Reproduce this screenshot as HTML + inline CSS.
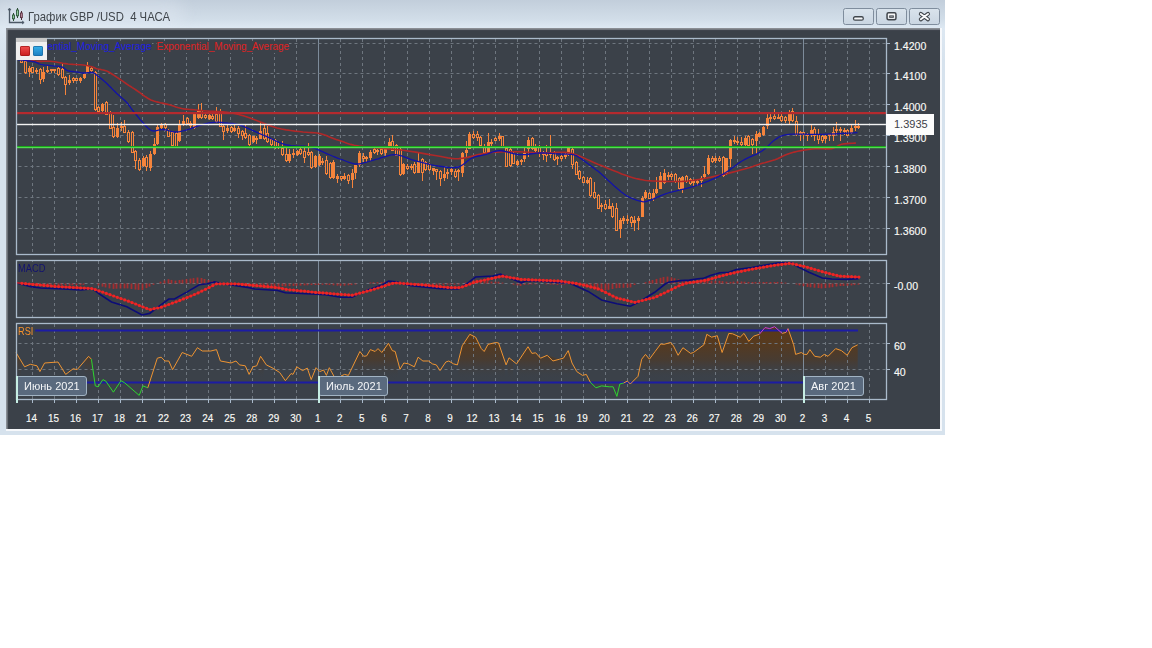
<!DOCTYPE html>
<html><head><meta charset="utf-8">
<style>
html,body{margin:0;padding:0;background:#fff;width:1152px;height:648px;overflow:hidden;font-family:"Liberation Sans",sans-serif;}
#win{position:absolute;left:0;top:0;width:945px;height:435px;background:linear-gradient(#c2cedb,#d2dee9 20px,#dde8f2 28px,#d6e2ed 60px,#d6e2ed);}
#glow{position:absolute;left:-6px;top:0px;width:190px;height:27px;border-radius:14px;background:rgba(232,239,245,0.35);filter:blur(8px);}
#title{position:absolute;left:28px;top:9.7px;font-size:12.2px;line-height:14px;color:#40464c;white-space:pre;transform:scaleX(0.93);transform-origin:0 0;}
#dark{position:absolute;left:6px;top:28px;width:934px;height:401px;background:#3b4149;box-shadow:inset 1.6px 1.8px 0.8px #8d9298;}
#shadow{position:absolute;left:6px;top:28px;width:936px;height:403px;background:#f6f8fb;}

.btn{position:absolute;top:8px;width:28.5px;height:15px;border:1px solid #7f8d9d;border-radius:2.5px;background:linear-gradient(#d9e3ec,#cad6e2);}
svg{position:absolute;left:0;top:0;}
.ax{font-size:11px;fill:#fafaf6;stroke:#fafaf6;stroke-width:0.15;font-family:"Liberation Sans",sans-serif;}
.lbl{position:absolute;top:376px;height:20px;background:#5a6a7e;border:1px solid #a2b4c4;border-radius:3px;box-sizing:border-box;}
.lbl span{position:absolute;left:7px;top:1.7px;color:#f4f6f8;font-size:11.5px;line-height:14px;white-space:pre;transform:scaleX(0.96);transform-origin:0 0;}
.mk{position:absolute;top:376px;width:2px;height:27px;background:#c6eee4;}
#legend{position:absolute;left:16px;top:38px;width:31px;height:22px;background:#f0f0f0;}
#legend .strip{position:absolute;left:0;top:0;width:31px;height:4px;background:#c8c8c8;}
.sq{position:absolute;top:8px;width:9.8px;height:9.8px;border-radius:2px;}
.leg{position:absolute;top:40.5px;font-size:10px;line-height:12px;white-space:pre;background:#3b4149;}
.plab{position:absolute;font-size:11px;line-height:12px;white-space:pre;background:#3b4149;transform-origin:0 0;}
</style></head><body>
<div id="win">
 <div id="glow"></div>
 <svg width="30" height="30" style="left:0;top:0;position:absolute">
  <path d="M9.5 9 V22.5 H23" fill="none" stroke="#4c5866" stroke-width="1.3"/>
  <path d="M8 10 L9.5 8 L11 10 Z M22.5 21 L24.2 22.5 L22.5 24 Z" fill="#4c5866" stroke="#4c5866" stroke-width="0.6"/>
  <line x1="13.5" y1="13" x2="13.5" y2="21" stroke="#2e4e38" stroke-width="1"/><rect x="12.5" y="15" width="2" height="3.8" fill="#90c89c" stroke="#2e5a3a" stroke-width="0.9"/>
  <line x1="17.5" y1="8" x2="17.5" y2="18" stroke="#2e4e38" stroke-width="1"/><rect x="16.5" y="10" width="2" height="5.8" fill="#90c89c" stroke="#2e5a3a" stroke-width="0.9"/>
  <line x1="21.5" y1="11" x2="21.5" y2="20" stroke="#4a2a36" stroke-width="1"/><rect x="20.5" y="13" width="1.8" height="4.6" fill="#c090a4" stroke="#5a3040" stroke-width="0.9"/>
 </svg>
 <div id="title">График GBP /USD  4 ЧАСА</div>
 <div class="btn" style="left:843px"><svg width="29" height="15" style="position:absolute;left:0;top:0"><rect x="9.55" y="7.75" width="9.7" height="3.4" rx="1.5" fill="#f6f8fa" stroke="#40464c" stroke-width="1.3"/></svg></div>
 <div class="btn" style="left:876px"><svg width="29" height="15" style="position:absolute;left:0;top:0"><defs><linearGradient id="bg1" x1="0" y1="0" x2="0" y2="1"><stop offset="0" stop-color="#ffffff"/><stop offset="1" stop-color="#dfe3e8"/></linearGradient></defs><rect x="10.05" y="3.85" width="8.9" height="7" rx="1.5" fill="url(#bg1)" stroke="#40464c" stroke-width="1.5"/><rect x="12.7" y="6.9" width="3.6" height="1.4" fill="#eef0f2" stroke="#40464c" stroke-width="1"/></svg></div>
 <div class="btn" style="left:909px"><svg width="29" height="15" style="position:absolute;left:0;top:0"><path d="M10.8 4.9 L18 10.3 M18 4.9 L10.8 10.3" stroke="#40464c" stroke-width="4" stroke-linecap="round"/><path d="M10.8 4.9 L18 10.3 M18 4.9 L10.8 10.3" stroke="#fafbfc" stroke-width="1.9" stroke-linecap="round"/></svg></div>
 <div id="shadow"></div>
 <div id="dark"></div>
</div>
<svg width="1152" height="648">
<defs><linearGradient id="rg" x1="0" y1="323" x2="0" y2="380" gradientUnits="userSpaceOnUse"><stop offset="0" stop-color="#5c3816" stop-opacity="1"/><stop offset="0.38" stop-color="#553a20" stop-opacity="1"/><stop offset="0.65" stop-color="#4c3a2a" stop-opacity="0.75"/><stop offset="1" stop-color="#3b4149" stop-opacity="0"/></linearGradient></defs>
<polygon points="16.0,382.0 16.0,361.0 16.0,352.5 21.1,361.0 21.1,382.0" fill="url(#rg)"/>
<polygon points="84.6,382.0 84.6,361.0 88.6,356.3 91.4,359.2 91.7,361.0 91.7,382.0" fill="url(#rg)"/>
<polygon points="258.7,382.0 258.7,361.0 260.6,356.3 263.7,361.0 263.7,382.0" fill="url(#rg)"/>
<polygon points="355.3,382.0 355.3,361.0 359.9,351.5 363.7,356.3 366.6,355.9 370.4,349.6 375.1,351.5 378.0,348.6 381.8,352.5 388.5,343.3 392.3,350.6 395.2,351.5 397.8,361.0 397.8,382.0" fill="url(#rg)"/>
<polygon points="458.4,382.0 458.4,361.0 462.2,345.8 469.8,334.3 475.6,337.2 481.3,348.6 484.2,351.5 488.0,344.4 495.6,342.5 498.5,342.9 504.8,361.0 504.8,382.0" fill="url(#rg)"/>
<polygon points="507.7,382.0 507.7,361.0 509.0,357.8 513.0,361.0 513.0,382.0" fill="url(#rg)"/>
<polygon points="518.5,382.0 518.5,361.0 528.0,346.7 531.9,353.4 535.7,352.8 540.5,358.2 547.2,355.3 559.6,359.2 563.4,358.2 568.2,350.6 571.4,361.0 571.4,382.0" fill="url(#rg)"/>
<polygon points="641.3,382.0 641.3,361.0 641.7,359.2 645.5,354.4 649.4,359.2 655.1,351.5 660.8,343.9 663.8,344.4 670.5,342.5 673.4,345.8 678.1,355.3 682.9,347.7 690.6,353.4 693.4,352.5 703.9,344.8 706.8,334.3 711.6,337.2 717.3,335.7 722.1,352.5 728.8,333.4 732.6,333.8 740.2,337.2 744.0,333.4 748.8,341.4 753.6,336.2 759.3,334.3 765.0,327.6 769.8,328.6 774.6,326.7 782.2,333.4 786.0,332.4 788.0,328.6 793.7,344.8 795.6,354.4 801.3,352.5 804.2,354.4 807.0,354.4 809.9,349.6 814.7,356.3 820.4,357.2 824.2,354.4 828.0,356.3 835.7,348.6 841.4,350.6 847.2,355.3 851.9,347.7 857.7,344.8 857.7,361.0 857.7,382.0" fill="url(#rg)"/>
<line x1="32.5" y1="39.0" x2="32.5" y2="254.5" stroke="#6e767f" stroke-width="1" stroke-dasharray="3 3"/>
<line x1="54.5" y1="39.0" x2="54.5" y2="254.5" stroke="#6e767f" stroke-width="1" stroke-dasharray="3 3"/>
<line x1="76.5" y1="39.0" x2="76.5" y2="254.5" stroke="#6e767f" stroke-width="1" stroke-dasharray="3 3"/>
<line x1="98.5" y1="39.0" x2="98.5" y2="254.5" stroke="#6e767f" stroke-width="1" stroke-dasharray="3 3"/>
<line x1="120.5" y1="39.0" x2="120.5" y2="254.5" stroke="#6e767f" stroke-width="1" stroke-dasharray="3 3"/>
<line x1="142.5" y1="39.0" x2="142.5" y2="254.5" stroke="#6e767f" stroke-width="1" stroke-dasharray="3 3"/>
<line x1="164.5" y1="39.0" x2="164.5" y2="254.5" stroke="#6e767f" stroke-width="1" stroke-dasharray="3 3"/>
<line x1="186.5" y1="39.0" x2="186.5" y2="254.5" stroke="#6e767f" stroke-width="1" stroke-dasharray="3 3"/>
<line x1="208.5" y1="39.0" x2="208.5" y2="254.5" stroke="#6e767f" stroke-width="1" stroke-dasharray="3 3"/>
<line x1="230.5" y1="39.0" x2="230.5" y2="254.5" stroke="#6e767f" stroke-width="1" stroke-dasharray="3 3"/>
<line x1="252.5" y1="39.0" x2="252.5" y2="254.5" stroke="#6e767f" stroke-width="1" stroke-dasharray="3 3"/>
<line x1="274.5" y1="39.0" x2="274.5" y2="254.5" stroke="#6e767f" stroke-width="1" stroke-dasharray="3 3"/>
<line x1="296.5" y1="39.0" x2="296.5" y2="254.5" stroke="#6e767f" stroke-width="1" stroke-dasharray="3 3"/>
<line x1="318.5" y1="38.5" x2="318.5" y2="254.5" stroke="#7d8b9a" stroke-width="1"/>
<line x1="340.5" y1="39.0" x2="340.5" y2="254.5" stroke="#6e767f" stroke-width="1" stroke-dasharray="3 3"/>
<line x1="362.5" y1="39.0" x2="362.5" y2="254.5" stroke="#6e767f" stroke-width="1" stroke-dasharray="3 3"/>
<line x1="384.5" y1="39.0" x2="384.5" y2="254.5" stroke="#6e767f" stroke-width="1" stroke-dasharray="3 3"/>
<line x1="407.5" y1="39.0" x2="407.5" y2="254.5" stroke="#6e767f" stroke-width="1" stroke-dasharray="3 3"/>
<line x1="429.5" y1="39.0" x2="429.5" y2="254.5" stroke="#6e767f" stroke-width="1" stroke-dasharray="3 3"/>
<line x1="451.5" y1="39.0" x2="451.5" y2="254.5" stroke="#6e767f" stroke-width="1" stroke-dasharray="3 3"/>
<line x1="473.5" y1="39.0" x2="473.5" y2="254.5" stroke="#6e767f" stroke-width="1" stroke-dasharray="3 3"/>
<line x1="495.5" y1="39.0" x2="495.5" y2="254.5" stroke="#6e767f" stroke-width="1" stroke-dasharray="3 3"/>
<line x1="517.5" y1="39.0" x2="517.5" y2="254.5" stroke="#6e767f" stroke-width="1" stroke-dasharray="3 3"/>
<line x1="539.5" y1="39.0" x2="539.5" y2="254.5" stroke="#6e767f" stroke-width="1" stroke-dasharray="3 3"/>
<line x1="561.5" y1="39.0" x2="561.5" y2="254.5" stroke="#6e767f" stroke-width="1" stroke-dasharray="3 3"/>
<line x1="583.5" y1="39.0" x2="583.5" y2="254.5" stroke="#6e767f" stroke-width="1" stroke-dasharray="3 3"/>
<line x1="605.5" y1="39.0" x2="605.5" y2="254.5" stroke="#6e767f" stroke-width="1" stroke-dasharray="3 3"/>
<line x1="627.5" y1="39.0" x2="627.5" y2="254.5" stroke="#6e767f" stroke-width="1" stroke-dasharray="3 3"/>
<line x1="649.5" y1="39.0" x2="649.5" y2="254.5" stroke="#6e767f" stroke-width="1" stroke-dasharray="3 3"/>
<line x1="671.5" y1="39.0" x2="671.5" y2="254.5" stroke="#6e767f" stroke-width="1" stroke-dasharray="3 3"/>
<line x1="693.5" y1="39.0" x2="693.5" y2="254.5" stroke="#6e767f" stroke-width="1" stroke-dasharray="3 3"/>
<line x1="715.5" y1="39.0" x2="715.5" y2="254.5" stroke="#6e767f" stroke-width="1" stroke-dasharray="3 3"/>
<line x1="737.5" y1="39.0" x2="737.5" y2="254.5" stroke="#6e767f" stroke-width="1" stroke-dasharray="3 3"/>
<line x1="759.5" y1="39.0" x2="759.5" y2="254.5" stroke="#6e767f" stroke-width="1" stroke-dasharray="3 3"/>
<line x1="781.5" y1="39.0" x2="781.5" y2="254.5" stroke="#6e767f" stroke-width="1" stroke-dasharray="3 3"/>
<line x1="803.5" y1="38.5" x2="803.5" y2="254.5" stroke="#7d8b9a" stroke-width="1"/>
<line x1="825.5" y1="39.0" x2="825.5" y2="254.5" stroke="#6e767f" stroke-width="1" stroke-dasharray="3 3"/>
<line x1="847.5" y1="39.0" x2="847.5" y2="254.5" stroke="#6e767f" stroke-width="1" stroke-dasharray="3 3"/>
<line x1="869.5" y1="39.0" x2="869.5" y2="254.5" stroke="#6e767f" stroke-width="1" stroke-dasharray="3 3"/>
<line x1="32.5" y1="261.0" x2="32.5" y2="317.5" stroke="#6e767f" stroke-width="1" stroke-dasharray="3 3"/>
<line x1="54.5" y1="261.0" x2="54.5" y2="317.5" stroke="#6e767f" stroke-width="1" stroke-dasharray="3 3"/>
<line x1="76.5" y1="261.0" x2="76.5" y2="317.5" stroke="#6e767f" stroke-width="1" stroke-dasharray="3 3"/>
<line x1="98.5" y1="261.0" x2="98.5" y2="317.5" stroke="#6e767f" stroke-width="1" stroke-dasharray="3 3"/>
<line x1="120.5" y1="261.0" x2="120.5" y2="317.5" stroke="#6e767f" stroke-width="1" stroke-dasharray="3 3"/>
<line x1="142.5" y1="261.0" x2="142.5" y2="317.5" stroke="#6e767f" stroke-width="1" stroke-dasharray="3 3"/>
<line x1="164.5" y1="261.0" x2="164.5" y2="317.5" stroke="#6e767f" stroke-width="1" stroke-dasharray="3 3"/>
<line x1="186.5" y1="261.0" x2="186.5" y2="317.5" stroke="#6e767f" stroke-width="1" stroke-dasharray="3 3"/>
<line x1="208.5" y1="261.0" x2="208.5" y2="317.5" stroke="#6e767f" stroke-width="1" stroke-dasharray="3 3"/>
<line x1="230.5" y1="261.0" x2="230.5" y2="317.5" stroke="#6e767f" stroke-width="1" stroke-dasharray="3 3"/>
<line x1="252.5" y1="261.0" x2="252.5" y2="317.5" stroke="#6e767f" stroke-width="1" stroke-dasharray="3 3"/>
<line x1="274.5" y1="261.0" x2="274.5" y2="317.5" stroke="#6e767f" stroke-width="1" stroke-dasharray="3 3"/>
<line x1="296.5" y1="261.0" x2="296.5" y2="317.5" stroke="#6e767f" stroke-width="1" stroke-dasharray="3 3"/>
<line x1="318.5" y1="260.5" x2="318.5" y2="317.5" stroke="#7d8b9a" stroke-width="1"/>
<line x1="340.5" y1="261.0" x2="340.5" y2="317.5" stroke="#6e767f" stroke-width="1" stroke-dasharray="3 3"/>
<line x1="362.5" y1="261.0" x2="362.5" y2="317.5" stroke="#6e767f" stroke-width="1" stroke-dasharray="3 3"/>
<line x1="384.5" y1="261.0" x2="384.5" y2="317.5" stroke="#6e767f" stroke-width="1" stroke-dasharray="3 3"/>
<line x1="407.5" y1="261.0" x2="407.5" y2="317.5" stroke="#6e767f" stroke-width="1" stroke-dasharray="3 3"/>
<line x1="429.5" y1="261.0" x2="429.5" y2="317.5" stroke="#6e767f" stroke-width="1" stroke-dasharray="3 3"/>
<line x1="451.5" y1="261.0" x2="451.5" y2="317.5" stroke="#6e767f" stroke-width="1" stroke-dasharray="3 3"/>
<line x1="473.5" y1="261.0" x2="473.5" y2="317.5" stroke="#6e767f" stroke-width="1" stroke-dasharray="3 3"/>
<line x1="495.5" y1="261.0" x2="495.5" y2="317.5" stroke="#6e767f" stroke-width="1" stroke-dasharray="3 3"/>
<line x1="517.5" y1="261.0" x2="517.5" y2="317.5" stroke="#6e767f" stroke-width="1" stroke-dasharray="3 3"/>
<line x1="539.5" y1="261.0" x2="539.5" y2="317.5" stroke="#6e767f" stroke-width="1" stroke-dasharray="3 3"/>
<line x1="561.5" y1="261.0" x2="561.5" y2="317.5" stroke="#6e767f" stroke-width="1" stroke-dasharray="3 3"/>
<line x1="583.5" y1="261.0" x2="583.5" y2="317.5" stroke="#6e767f" stroke-width="1" stroke-dasharray="3 3"/>
<line x1="605.5" y1="261.0" x2="605.5" y2="317.5" stroke="#6e767f" stroke-width="1" stroke-dasharray="3 3"/>
<line x1="627.5" y1="261.0" x2="627.5" y2="317.5" stroke="#6e767f" stroke-width="1" stroke-dasharray="3 3"/>
<line x1="649.5" y1="261.0" x2="649.5" y2="317.5" stroke="#6e767f" stroke-width="1" stroke-dasharray="3 3"/>
<line x1="671.5" y1="261.0" x2="671.5" y2="317.5" stroke="#6e767f" stroke-width="1" stroke-dasharray="3 3"/>
<line x1="693.5" y1="261.0" x2="693.5" y2="317.5" stroke="#6e767f" stroke-width="1" stroke-dasharray="3 3"/>
<line x1="715.5" y1="261.0" x2="715.5" y2="317.5" stroke="#6e767f" stroke-width="1" stroke-dasharray="3 3"/>
<line x1="737.5" y1="261.0" x2="737.5" y2="317.5" stroke="#6e767f" stroke-width="1" stroke-dasharray="3 3"/>
<line x1="759.5" y1="261.0" x2="759.5" y2="317.5" stroke="#6e767f" stroke-width="1" stroke-dasharray="3 3"/>
<line x1="781.5" y1="261.0" x2="781.5" y2="317.5" stroke="#6e767f" stroke-width="1" stroke-dasharray="3 3"/>
<line x1="803.5" y1="260.5" x2="803.5" y2="317.5" stroke="#7d8b9a" stroke-width="1"/>
<line x1="825.5" y1="261.0" x2="825.5" y2="317.5" stroke="#6e767f" stroke-width="1" stroke-dasharray="3 3"/>
<line x1="847.5" y1="261.0" x2="847.5" y2="317.5" stroke="#6e767f" stroke-width="1" stroke-dasharray="3 3"/>
<line x1="869.5" y1="261.0" x2="869.5" y2="317.5" stroke="#6e767f" stroke-width="1" stroke-dasharray="3 3"/>
<line x1="32.5" y1="324.0" x2="32.5" y2="399.5" stroke="#6e767f" stroke-width="1" stroke-dasharray="3 3"/>
<line x1="54.5" y1="324.0" x2="54.5" y2="399.5" stroke="#6e767f" stroke-width="1" stroke-dasharray="3 3"/>
<line x1="76.5" y1="324.0" x2="76.5" y2="399.5" stroke="#6e767f" stroke-width="1" stroke-dasharray="3 3"/>
<line x1="98.5" y1="324.0" x2="98.5" y2="399.5" stroke="#6e767f" stroke-width="1" stroke-dasharray="3 3"/>
<line x1="120.5" y1="324.0" x2="120.5" y2="399.5" stroke="#6e767f" stroke-width="1" stroke-dasharray="3 3"/>
<line x1="142.5" y1="324.0" x2="142.5" y2="399.5" stroke="#6e767f" stroke-width="1" stroke-dasharray="3 3"/>
<line x1="164.5" y1="324.0" x2="164.5" y2="399.5" stroke="#6e767f" stroke-width="1" stroke-dasharray="3 3"/>
<line x1="186.5" y1="324.0" x2="186.5" y2="399.5" stroke="#6e767f" stroke-width="1" stroke-dasharray="3 3"/>
<line x1="208.5" y1="324.0" x2="208.5" y2="399.5" stroke="#6e767f" stroke-width="1" stroke-dasharray="3 3"/>
<line x1="230.5" y1="324.0" x2="230.5" y2="399.5" stroke="#6e767f" stroke-width="1" stroke-dasharray="3 3"/>
<line x1="252.5" y1="324.0" x2="252.5" y2="399.5" stroke="#6e767f" stroke-width="1" stroke-dasharray="3 3"/>
<line x1="274.5" y1="324.0" x2="274.5" y2="399.5" stroke="#6e767f" stroke-width="1" stroke-dasharray="3 3"/>
<line x1="296.5" y1="324.0" x2="296.5" y2="399.5" stroke="#6e767f" stroke-width="1" stroke-dasharray="3 3"/>
<line x1="318.5" y1="323.5" x2="318.5" y2="399.5" stroke="#7d8b9a" stroke-width="1"/>
<line x1="340.5" y1="324.0" x2="340.5" y2="399.5" stroke="#6e767f" stroke-width="1" stroke-dasharray="3 3"/>
<line x1="362.5" y1="324.0" x2="362.5" y2="399.5" stroke="#6e767f" stroke-width="1" stroke-dasharray="3 3"/>
<line x1="384.5" y1="324.0" x2="384.5" y2="399.5" stroke="#6e767f" stroke-width="1" stroke-dasharray="3 3"/>
<line x1="407.5" y1="324.0" x2="407.5" y2="399.5" stroke="#6e767f" stroke-width="1" stroke-dasharray="3 3"/>
<line x1="429.5" y1="324.0" x2="429.5" y2="399.5" stroke="#6e767f" stroke-width="1" stroke-dasharray="3 3"/>
<line x1="451.5" y1="324.0" x2="451.5" y2="399.5" stroke="#6e767f" stroke-width="1" stroke-dasharray="3 3"/>
<line x1="473.5" y1="324.0" x2="473.5" y2="399.5" stroke="#6e767f" stroke-width="1" stroke-dasharray="3 3"/>
<line x1="495.5" y1="324.0" x2="495.5" y2="399.5" stroke="#6e767f" stroke-width="1" stroke-dasharray="3 3"/>
<line x1="517.5" y1="324.0" x2="517.5" y2="399.5" stroke="#6e767f" stroke-width="1" stroke-dasharray="3 3"/>
<line x1="539.5" y1="324.0" x2="539.5" y2="399.5" stroke="#6e767f" stroke-width="1" stroke-dasharray="3 3"/>
<line x1="561.5" y1="324.0" x2="561.5" y2="399.5" stroke="#6e767f" stroke-width="1" stroke-dasharray="3 3"/>
<line x1="583.5" y1="324.0" x2="583.5" y2="399.5" stroke="#6e767f" stroke-width="1" stroke-dasharray="3 3"/>
<line x1="605.5" y1="324.0" x2="605.5" y2="399.5" stroke="#6e767f" stroke-width="1" stroke-dasharray="3 3"/>
<line x1="627.5" y1="324.0" x2="627.5" y2="399.5" stroke="#6e767f" stroke-width="1" stroke-dasharray="3 3"/>
<line x1="649.5" y1="324.0" x2="649.5" y2="399.5" stroke="#6e767f" stroke-width="1" stroke-dasharray="3 3"/>
<line x1="671.5" y1="324.0" x2="671.5" y2="399.5" stroke="#6e767f" stroke-width="1" stroke-dasharray="3 3"/>
<line x1="693.5" y1="324.0" x2="693.5" y2="399.5" stroke="#6e767f" stroke-width="1" stroke-dasharray="3 3"/>
<line x1="715.5" y1="324.0" x2="715.5" y2="399.5" stroke="#6e767f" stroke-width="1" stroke-dasharray="3 3"/>
<line x1="737.5" y1="324.0" x2="737.5" y2="399.5" stroke="#6e767f" stroke-width="1" stroke-dasharray="3 3"/>
<line x1="759.5" y1="324.0" x2="759.5" y2="399.5" stroke="#6e767f" stroke-width="1" stroke-dasharray="3 3"/>
<line x1="781.5" y1="324.0" x2="781.5" y2="399.5" stroke="#6e767f" stroke-width="1" stroke-dasharray="3 3"/>
<line x1="803.5" y1="323.5" x2="803.5" y2="399.5" stroke="#7d8b9a" stroke-width="1"/>
<line x1="825.5" y1="324.0" x2="825.5" y2="399.5" stroke="#6e767f" stroke-width="1" stroke-dasharray="3 3"/>
<line x1="847.5" y1="324.0" x2="847.5" y2="399.5" stroke="#6e767f" stroke-width="1" stroke-dasharray="3 3"/>
<line x1="869.5" y1="324.0" x2="869.5" y2="399.5" stroke="#6e767f" stroke-width="1" stroke-dasharray="3 3"/>
<line x1="18.5" y1="43.5" x2="886.5" y2="43.5" stroke="#6e767f" stroke-width="1" stroke-dasharray="3 3"/>
<line x1="18.5" y1="73.5" x2="886.5" y2="73.5" stroke="#6e767f" stroke-width="1" stroke-dasharray="3 3"/>
<line x1="18.5" y1="104.5" x2="886.5" y2="104.5" stroke="#6e767f" stroke-width="1" stroke-dasharray="3 3"/>
<line x1="18.5" y1="135.5" x2="886.5" y2="135.5" stroke="#6e767f" stroke-width="1" stroke-dasharray="3 3"/>
<line x1="18.5" y1="166.5" x2="886.5" y2="166.5" stroke="#6e767f" stroke-width="1" stroke-dasharray="3 3"/>
<line x1="18.5" y1="197.5" x2="886.5" y2="197.5" stroke="#6e767f" stroke-width="1" stroke-dasharray="3 3"/>
<line x1="18.5" y1="228.5" x2="886.5" y2="228.5" stroke="#6e767f" stroke-width="1" stroke-dasharray="3 3"/>
<line x1="18.5" y1="283.5" x2="886.5" y2="283.5" stroke="#6e767f" stroke-width="1" stroke-dasharray="3 3"/>
<line x1="18.5" y1="343.5" x2="886.5" y2="343.5" stroke="#6e767f" stroke-width="1" stroke-dasharray="3 3"/>
<line x1="18.5" y1="369.5" x2="886.5" y2="369.5" stroke="#6e767f" stroke-width="1" stroke-dasharray="3 3"/>
<rect x="21" y="59" width="1" height="4" fill="#f5843c"/>
<rect x="20.5" y="60.5" width="2" height="2" fill="#3b4149" stroke="#f5843c" stroke-width="1"/>
<rect x="25" y="60" width="1" height="14" fill="#f5843c"/>
<rect x="24.5" y="61.5" width="2" height="11" fill="#3b4149" stroke="#f5843c" stroke-width="1"/>
<rect x="29" y="66" width="1" height="11" fill="#f5843c"/>
<rect x="28" y="68" width="3" height="4" fill="#f5843c"/>
<rect x="32" y="67" width="1" height="6" fill="#f5843c"/>
<rect x="31.5" y="67.5" width="2" height="5" fill="#3b4149" stroke="#f5843c" stroke-width="1"/>
<rect x="36" y="68" width="1" height="6" fill="#f5843c"/>
<rect x="35" y="70" width="3" height="2" fill="#f5843c"/>
<rect x="40" y="68" width="1" height="16" fill="#f5843c"/>
<rect x="39.5" y="69.5" width="2" height="10" fill="#3b4149" stroke="#f5843c" stroke-width="1"/>
<rect x="43" y="67" width="1" height="15" fill="#f5843c"/>
<rect x="42" y="72" width="3" height="7" fill="#f5843c"/>
<rect x="47" y="66" width="1" height="7" fill="#f5843c"/>
<rect x="46.5" y="70.5" width="2" height="1" fill="#3b4149" stroke="#f5843c" stroke-width="1"/>
<rect x="51" y="69" width="1" height="4" fill="#f5843c"/>
<rect x="50" y="69" width="3" height="2" fill="#f5843c"/>
<rect x="54" y="69" width="1" height="4" fill="#f5843c"/>
<rect x="53.5" y="69.5" width="2" height="1" fill="#3b4149" stroke="#f5843c" stroke-width="1"/>
<rect x="58" y="67" width="1" height="9" fill="#f5843c"/>
<rect x="57.5" y="68.5" width="2" height="6" fill="#3b4149" stroke="#f5843c" stroke-width="1"/>
<rect x="62" y="64" width="1" height="15" fill="#f5843c"/>
<rect x="61.5" y="69.5" width="2" height="8" fill="#3b4149" stroke="#f5843c" stroke-width="1"/>
<rect x="65" y="76" width="1" height="19" fill="#f5843c"/>
<rect x="64.5" y="77.5" width="2" height="7" fill="#3b4149" stroke="#f5843c" stroke-width="1"/>
<rect x="69" y="75" width="1" height="10" fill="#f5843c"/>
<rect x="68" y="80" width="3" height="3" fill="#f5843c"/>
<rect x="73" y="77" width="1" height="6" fill="#f5843c"/>
<rect x="72.5" y="78.5" width="2" height="2" fill="#3b4149" stroke="#f5843c" stroke-width="1"/>
<rect x="76" y="78" width="1" height="3" fill="#f5843c"/>
<rect x="75.5" y="78.5" width="2" height="2" fill="#3b4149" stroke="#f5843c" stroke-width="1"/>
<rect x="80" y="77" width="1" height="6" fill="#f5843c"/>
<rect x="79" y="78" width="3" height="3" fill="#f5843c"/>
<rect x="84" y="73" width="1" height="6" fill="#f5843c"/>
<rect x="83" y="74" width="3" height="4" fill="#f5843c"/>
<rect x="87" y="62" width="1" height="11" fill="#f5843c"/>
<rect x="86" y="66" width="3" height="7" fill="#f5843c"/>
<rect x="91" y="66" width="1" height="7" fill="#f5843c"/>
<rect x="90.5" y="68.5" width="2" height="2" fill="#3b4149" stroke="#f5843c" stroke-width="1"/>
<rect x="95" y="71" width="1" height="40" fill="#f5843c"/>
<rect x="94.5" y="72.5" width="2" height="37" fill="#3b4149" stroke="#f5843c" stroke-width="1"/>
<rect x="98" y="106" width="1" height="7" fill="#f5843c"/>
<rect x="97.5" y="107.5" width="2" height="4" fill="#3b4149" stroke="#f5843c" stroke-width="1"/>
<rect x="102" y="103" width="1" height="9" fill="#f5843c"/>
<rect x="101" y="104" width="3" height="7" fill="#f5843c"/>
<rect x="106" y="101" width="1" height="14" fill="#f5843c"/>
<rect x="105.5" y="102.5" width="2" height="12" fill="#3b4149" stroke="#f5843c" stroke-width="1"/>
<rect x="110" y="111" width="1" height="18" fill="#f5843c"/>
<rect x="109.5" y="112.5" width="2" height="16" fill="#3b4149" stroke="#f5843c" stroke-width="1"/>
<rect x="113" y="115" width="1" height="23" fill="#f5843c"/>
<rect x="112.5" y="127.5" width="2" height="9" fill="#3b4149" stroke="#f5843c" stroke-width="1"/>
<rect x="117" y="123" width="1" height="15" fill="#f5843c"/>
<rect x="116" y="128" width="3" height="9" fill="#f5843c"/>
<rect x="121" y="122" width="1" height="9" fill="#f5843c"/>
<rect x="120" y="126" width="3" height="2" fill="#f5843c"/>
<rect x="124" y="120" width="1" height="13" fill="#f5843c"/>
<rect x="123.5" y="126.5" width="2" height="6" fill="#3b4149" stroke="#f5843c" stroke-width="1"/>
<rect x="128" y="130" width="1" height="13" fill="#f5843c"/>
<rect x="127.5" y="132.5" width="2" height="9" fill="#3b4149" stroke="#f5843c" stroke-width="1"/>
<rect x="132" y="131" width="1" height="22" fill="#f5843c"/>
<rect x="131.5" y="132.5" width="2" height="20" fill="#3b4149" stroke="#f5843c" stroke-width="1"/>
<rect x="135" y="150" width="1" height="19" fill="#f5843c"/>
<rect x="134.5" y="151.5" width="2" height="9" fill="#3b4149" stroke="#f5843c" stroke-width="1"/>
<rect x="139" y="158" width="1" height="13" fill="#f5843c"/>
<rect x="138.5" y="160.5" width="2" height="9" fill="#3b4149" stroke="#f5843c" stroke-width="1"/>
<rect x="143" y="156" width="1" height="11" fill="#f5843c"/>
<rect x="142" y="158" width="3" height="8" fill="#f5843c"/>
<rect x="146" y="155" width="1" height="16" fill="#f5843c"/>
<rect x="145.5" y="157.5" width="2" height="9" fill="#3b4149" stroke="#f5843c" stroke-width="1"/>
<rect x="150" y="151" width="1" height="20" fill="#f5843c"/>
<rect x="149" y="154" width="3" height="14" fill="#f5843c"/>
<rect x="154" y="138" width="1" height="17" fill="#f5843c"/>
<rect x="153" y="144" width="3" height="10" fill="#f5843c"/>
<rect x="157" y="125" width="1" height="20" fill="#f5843c"/>
<rect x="156" y="127" width="3" height="17" fill="#f5843c"/>
<rect x="161" y="123" width="1" height="6" fill="#f5843c"/>
<rect x="160" y="124" width="3" height="4" fill="#f5843c"/>
<rect x="165" y="123" width="1" height="8" fill="#f5843c"/>
<rect x="164.5" y="124.5" width="2" height="3" fill="#3b4149" stroke="#f5843c" stroke-width="1"/>
<rect x="168" y="129" width="1" height="8" fill="#f5843c"/>
<rect x="167.5" y="130.5" width="2" height="6" fill="#3b4149" stroke="#f5843c" stroke-width="1"/>
<rect x="172" y="131" width="1" height="16" fill="#f5843c"/>
<rect x="171.5" y="132.5" width="2" height="13" fill="#3b4149" stroke="#f5843c" stroke-width="1"/>
<rect x="176" y="132" width="1" height="16" fill="#f5843c"/>
<rect x="175.5" y="133.5" width="2" height="13" fill="#3b4149" stroke="#f5843c" stroke-width="1"/>
<rect x="179" y="120" width="1" height="22" fill="#f5843c"/>
<rect x="178" y="124" width="3" height="17" fill="#f5843c"/>
<rect x="183" y="115" width="1" height="11" fill="#f5843c"/>
<rect x="182" y="121" width="3" height="3" fill="#f5843c"/>
<rect x="187" y="117" width="1" height="8" fill="#f5843c"/>
<rect x="186.5" y="118.5" width="2" height="5" fill="#3b4149" stroke="#f5843c" stroke-width="1"/>
<rect x="190" y="121" width="1" height="8" fill="#f5843c"/>
<rect x="189.5" y="123.5" width="2" height="2" fill="#3b4149" stroke="#f5843c" stroke-width="1"/>
<rect x="194" y="112" width="1" height="17" fill="#f5843c"/>
<rect x="193" y="114" width="3" height="14" fill="#f5843c"/>
<rect x="198" y="104" width="1" height="15" fill="#f5843c"/>
<rect x="197" y="110" width="3" height="8" fill="#f5843c"/>
<rect x="201" y="103" width="1" height="16" fill="#f5843c"/>
<rect x="200.5" y="110.5" width="2" height="7" fill="#3b4149" stroke="#f5843c" stroke-width="1"/>
<rect x="205" y="114" width="1" height="5" fill="#f5843c"/>
<rect x="204.5" y="115.5" width="2" height="2" fill="#3b4149" stroke="#f5843c" stroke-width="1"/>
<rect x="209" y="114" width="1" height="6" fill="#f5843c"/>
<rect x="208" y="115" width="3" height="4" fill="#f5843c"/>
<rect x="212" y="114" width="1" height="6" fill="#f5843c"/>
<rect x="211.5" y="116.5" width="2" height="2" fill="#3b4149" stroke="#f5843c" stroke-width="1"/>
<rect x="216" y="107" width="1" height="16" fill="#f5843c"/>
<rect x="215.5" y="114.5" width="2" height="7" fill="#3b4149" stroke="#f5843c" stroke-width="1"/>
<rect x="220" y="109" width="1" height="18" fill="#f5843c"/>
<rect x="219.5" y="112.5" width="2" height="14" fill="#3b4149" stroke="#f5843c" stroke-width="1"/>
<rect x="223" y="124" width="1" height="16" fill="#f5843c"/>
<rect x="222.5" y="126.5" width="2" height="5" fill="#3b4149" stroke="#f5843c" stroke-width="1"/>
<rect x="227" y="124" width="1" height="9" fill="#f5843c"/>
<rect x="226" y="128" width="3" height="3" fill="#f5843c"/>
<rect x="231" y="126" width="1" height="7" fill="#f5843c"/>
<rect x="230.5" y="127.5" width="2" height="4" fill="#3b4149" stroke="#f5843c" stroke-width="1"/>
<rect x="234" y="124" width="1" height="8" fill="#f5843c"/>
<rect x="233" y="128" width="3" height="3" fill="#f5843c"/>
<rect x="238" y="126" width="1" height="12" fill="#f5843c"/>
<rect x="237.5" y="128.5" width="2" height="5" fill="#3b4149" stroke="#f5843c" stroke-width="1"/>
<rect x="242" y="130" width="1" height="10" fill="#f5843c"/>
<rect x="241.5" y="131.5" width="2" height="4" fill="#3b4149" stroke="#f5843c" stroke-width="1"/>
<rect x="245" y="125" width="1" height="14" fill="#f5843c"/>
<rect x="244.5" y="133.5" width="2" height="4" fill="#3b4149" stroke="#f5843c" stroke-width="1"/>
<rect x="249" y="134" width="1" height="12" fill="#f5843c"/>
<rect x="248.5" y="135.5" width="2" height="9" fill="#3b4149" stroke="#f5843c" stroke-width="1"/>
<rect x="253" y="136" width="1" height="7" fill="#f5843c"/>
<rect x="252" y="136" width="3" height="6" fill="#f5843c"/>
<rect x="256" y="136" width="1" height="8" fill="#f5843c"/>
<rect x="255" y="138" width="3" height="2" fill="#f5843c"/>
<rect x="260" y="122" width="1" height="17" fill="#f5843c"/>
<rect x="259" y="131" width="3" height="8" fill="#f5843c"/>
<rect x="264" y="124" width="1" height="16" fill="#f5843c"/>
<rect x="263.5" y="128.5" width="2" height="10" fill="#3b4149" stroke="#f5843c" stroke-width="1"/>
<rect x="267" y="126" width="1" height="17" fill="#f5843c"/>
<rect x="266.5" y="133.5" width="2" height="8" fill="#3b4149" stroke="#f5843c" stroke-width="1"/>
<rect x="271" y="138" width="1" height="8" fill="#f5843c"/>
<rect x="270.5" y="139.5" width="2" height="5" fill="#3b4149" stroke="#f5843c" stroke-width="1"/>
<rect x="275" y="139" width="1" height="10" fill="#f5843c"/>
<rect x="274.5" y="140.5" width="2" height="7" fill="#3b4149" stroke="#f5843c" stroke-width="1"/>
<rect x="278" y="143" width="1" height="6" fill="#f5843c"/>
<rect x="277" y="146" width="3" height="2" fill="#f5843c"/>
<rect x="282" y="141" width="1" height="15" fill="#f5843c"/>
<rect x="281.5" y="148.5" width="2" height="6" fill="#3b4149" stroke="#f5843c" stroke-width="1"/>
<rect x="286" y="146" width="1" height="16" fill="#f5843c"/>
<rect x="285.5" y="154.5" width="2" height="6" fill="#3b4149" stroke="#f5843c" stroke-width="1"/>
<rect x="289" y="149" width="1" height="14" fill="#f5843c"/>
<rect x="288" y="154" width="3" height="7" fill="#f5843c"/>
<rect x="293" y="149" width="1" height="9" fill="#f5843c"/>
<rect x="292.5" y="153.5" width="2" height="1" fill="#3b4149" stroke="#f5843c" stroke-width="1"/>
<rect x="297" y="150" width="1" height="6" fill="#f5843c"/>
<rect x="296" y="151" width="3" height="4" fill="#f5843c"/>
<rect x="300" y="147" width="1" height="8" fill="#f5843c"/>
<rect x="299.5" y="149.5" width="2" height="4" fill="#3b4149" stroke="#f5843c" stroke-width="1"/>
<rect x="304" y="148" width="1" height="15" fill="#f5843c"/>
<rect x="303.5" y="151.5" width="2" height="6" fill="#3b4149" stroke="#f5843c" stroke-width="1"/>
<rect x="308" y="143" width="1" height="13" fill="#f5843c"/>
<rect x="307.5" y="152.5" width="2" height="2" fill="#3b4149" stroke="#f5843c" stroke-width="1"/>
<rect x="311" y="151" width="1" height="18" fill="#f5843c"/>
<rect x="310.5" y="152.5" width="2" height="15" fill="#3b4149" stroke="#f5843c" stroke-width="1"/>
<rect x="315" y="155" width="1" height="13" fill="#f5843c"/>
<rect x="314" y="156" width="3" height="11" fill="#f5843c"/>
<rect x="319" y="154" width="1" height="12" fill="#f5843c"/>
<rect x="318" y="156" width="3" height="9" fill="#f5843c"/>
<rect x="322" y="158" width="1" height="7" fill="#f5843c"/>
<rect x="321" y="161" width="3" height="2" fill="#f5843c"/>
<rect x="326" y="156" width="1" height="19" fill="#f5843c"/>
<rect x="325.5" y="160.5" width="2" height="13" fill="#3b4149" stroke="#f5843c" stroke-width="1"/>
<rect x="330" y="162" width="1" height="17" fill="#f5843c"/>
<rect x="329.5" y="163.5" width="2" height="14" fill="#3b4149" stroke="#f5843c" stroke-width="1"/>
<rect x="333" y="160" width="1" height="19" fill="#f5843c"/>
<rect x="332" y="162" width="3" height="16" fill="#f5843c"/>
<rect x="337" y="174" width="1" height="9" fill="#f5843c"/>
<rect x="336" y="176" width="3" height="3" fill="#f5843c"/>
<rect x="341" y="176" width="1" height="5" fill="#f5843c"/>
<rect x="340.5" y="176.5" width="2" height="2" fill="#3b4149" stroke="#f5843c" stroke-width="1"/>
<rect x="344" y="173" width="1" height="7" fill="#f5843c"/>
<rect x="343" y="176" width="3" height="3" fill="#f5843c"/>
<rect x="348" y="174" width="1" height="10" fill="#f5843c"/>
<rect x="347.5" y="175.5" width="2" height="5" fill="#3b4149" stroke="#f5843c" stroke-width="1"/>
<rect x="352" y="169" width="1" height="19" fill="#f5843c"/>
<rect x="351" y="173" width="3" height="7" fill="#f5843c"/>
<rect x="355" y="165" width="1" height="14" fill="#f5843c"/>
<rect x="354" y="165" width="3" height="8" fill="#f5843c"/>
<rect x="359" y="151" width="1" height="16" fill="#f5843c"/>
<rect x="358" y="153" width="3" height="12" fill="#f5843c"/>
<rect x="363" y="153" width="1" height="9" fill="#f5843c"/>
<rect x="362.5" y="156.5" width="2" height="2" fill="#3b4149" stroke="#f5843c" stroke-width="1"/>
<rect x="366" y="156" width="1" height="6" fill="#f5843c"/>
<rect x="365" y="157" width="3" height="2" fill="#f5843c"/>
<rect x="370" y="150" width="1" height="11" fill="#f5843c"/>
<rect x="369" y="152" width="3" height="6" fill="#f5843c"/>
<rect x="374" y="146" width="1" height="8" fill="#f5843c"/>
<rect x="373.5" y="149.5" width="2" height="3" fill="#3b4149" stroke="#f5843c" stroke-width="1"/>
<rect x="377" y="149" width="1" height="6" fill="#f5843c"/>
<rect x="376" y="150" width="3" height="2" fill="#f5843c"/>
<rect x="381" y="148" width="1" height="7" fill="#f5843c"/>
<rect x="380.5" y="149.5" width="2" height="4" fill="#3b4149" stroke="#f5843c" stroke-width="1"/>
<rect x="385" y="148" width="1" height="8" fill="#f5843c"/>
<rect x="384" y="149" width="3" height="4" fill="#f5843c"/>
<rect x="389" y="138" width="1" height="10" fill="#f5843c"/>
<rect x="388" y="142" width="3" height="5" fill="#f5843c"/>
<rect x="392" y="135" width="1" height="16" fill="#f5843c"/>
<rect x="391.5" y="141.5" width="2" height="9" fill="#3b4149" stroke="#f5843c" stroke-width="1"/>
<rect x="396" y="144" width="1" height="12" fill="#f5843c"/>
<rect x="395.5" y="145.5" width="2" height="10" fill="#3b4149" stroke="#f5843c" stroke-width="1"/>
<rect x="400" y="146" width="1" height="30" fill="#f5843c"/>
<rect x="399.5" y="149.5" width="2" height="25" fill="#3b4149" stroke="#f5843c" stroke-width="1"/>
<rect x="403" y="163" width="1" height="12" fill="#f5843c"/>
<rect x="402" y="164" width="3" height="10" fill="#f5843c"/>
<rect x="407" y="164" width="1" height="6" fill="#f5843c"/>
<rect x="406.5" y="166.5" width="2" height="2" fill="#3b4149" stroke="#f5843c" stroke-width="1"/>
<rect x="411" y="164" width="1" height="6" fill="#f5843c"/>
<rect x="410" y="166" width="3" height="2" fill="#f5843c"/>
<rect x="414" y="162" width="1" height="12" fill="#f5843c"/>
<rect x="413.5" y="164.5" width="2" height="8" fill="#3b4149" stroke="#f5843c" stroke-width="1"/>
<rect x="418" y="152" width="1" height="21" fill="#f5843c"/>
<rect x="417" y="162" width="3" height="11" fill="#f5843c"/>
<rect x="422" y="158" width="1" height="23" fill="#f5843c"/>
<rect x="421.5" y="159.5" width="2" height="13" fill="#3b4149" stroke="#f5843c" stroke-width="1"/>
<rect x="425" y="161" width="1" height="10" fill="#f5843c"/>
<rect x="424.5" y="162.5" width="2" height="7" fill="#3b4149" stroke="#f5843c" stroke-width="1"/>
<rect x="429" y="163" width="1" height="8" fill="#f5843c"/>
<rect x="428.5" y="164.5" width="2" height="5" fill="#3b4149" stroke="#f5843c" stroke-width="1"/>
<rect x="433" y="168" width="1" height="7" fill="#f5843c"/>
<rect x="432" y="168" width="3" height="3" fill="#f5843c"/>
<rect x="436" y="169" width="1" height="11" fill="#f5843c"/>
<rect x="435.5" y="169.5" width="2" height="2" fill="#3b4149" stroke="#f5843c" stroke-width="1"/>
<rect x="440" y="170" width="1" height="16" fill="#f5843c"/>
<rect x="439.5" y="171.5" width="2" height="7" fill="#3b4149" stroke="#f5843c" stroke-width="1"/>
<rect x="444" y="167" width="1" height="14" fill="#f5843c"/>
<rect x="443" y="174" width="3" height="4" fill="#f5843c"/>
<rect x="447" y="169" width="1" height="10" fill="#f5843c"/>
<rect x="446.5" y="172.5" width="2" height="1" fill="#3b4149" stroke="#f5843c" stroke-width="1"/>
<rect x="451" y="168" width="1" height="7" fill="#f5843c"/>
<rect x="450" y="169" width="3" height="3" fill="#f5843c"/>
<rect x="455" y="169" width="1" height="9" fill="#f5843c"/>
<rect x="454.5" y="171.5" width="2" height="5" fill="#3b4149" stroke="#f5843c" stroke-width="1"/>
<rect x="458" y="169" width="1" height="12" fill="#f5843c"/>
<rect x="457.5" y="170.5" width="2" height="1" fill="#3b4149" stroke="#f5843c" stroke-width="1"/>
<rect x="462" y="152" width="1" height="25" fill="#f5843c"/>
<rect x="461" y="153" width="3" height="20" fill="#f5843c"/>
<rect x="466" y="141" width="1" height="17" fill="#f5843c"/>
<rect x="465" y="150" width="3" height="3" fill="#f5843c"/>
<rect x="469" y="132" width="1" height="17" fill="#f5843c"/>
<rect x="468" y="134" width="3" height="15" fill="#f5843c"/>
<rect x="473" y="131" width="1" height="8" fill="#f5843c"/>
<rect x="472.5" y="134.5" width="2" height="3" fill="#3b4149" stroke="#f5843c" stroke-width="1"/>
<rect x="477" y="131" width="1" height="10" fill="#f5843c"/>
<rect x="476.5" y="134.5" width="2" height="3" fill="#3b4149" stroke="#f5843c" stroke-width="1"/>
<rect x="480" y="136" width="1" height="11" fill="#f5843c"/>
<rect x="479.5" y="137.5" width="2" height="8" fill="#3b4149" stroke="#f5843c" stroke-width="1"/>
<rect x="484" y="144" width="1" height="10" fill="#f5843c"/>
<rect x="483.5" y="147.5" width="2" height="5" fill="#3b4149" stroke="#f5843c" stroke-width="1"/>
<rect x="488" y="133" width="1" height="21" fill="#f5843c"/>
<rect x="487" y="142" width="3" height="11" fill="#f5843c"/>
<rect x="491" y="139" width="1" height="7" fill="#f5843c"/>
<rect x="490" y="142" width="3" height="2" fill="#f5843c"/>
<rect x="495" y="137" width="1" height="4" fill="#f5843c"/>
<rect x="494.5" y="138.5" width="2" height="2" fill="#3b4149" stroke="#f5843c" stroke-width="1"/>
<rect x="499" y="133" width="1" height="8" fill="#f5843c"/>
<rect x="498" y="136" width="3" height="3" fill="#f5843c"/>
<rect x="502" y="136" width="1" height="12" fill="#f5843c"/>
<rect x="501.5" y="136.5" width="2" height="10" fill="#3b4149" stroke="#f5843c" stroke-width="1"/>
<rect x="506" y="146" width="1" height="21" fill="#f5843c"/>
<rect x="505.5" y="148.5" width="2" height="18" fill="#3b4149" stroke="#f5843c" stroke-width="1"/>
<rect x="510" y="148" width="1" height="19" fill="#f5843c"/>
<rect x="509.5" y="149.5" width="2" height="16" fill="#3b4149" stroke="#f5843c" stroke-width="1"/>
<rect x="513" y="152" width="1" height="12" fill="#f5843c"/>
<rect x="512.5" y="153.5" width="2" height="10" fill="#3b4149" stroke="#f5843c" stroke-width="1"/>
<rect x="517" y="160" width="1" height="6" fill="#f5843c"/>
<rect x="516" y="161" width="3" height="4" fill="#f5843c"/>
<rect x="521" y="159" width="1" height="6" fill="#f5843c"/>
<rect x="520.5" y="160.5" width="2" height="1" fill="#3b4149" stroke="#f5843c" stroke-width="1"/>
<rect x="524" y="146" width="1" height="16" fill="#f5843c"/>
<rect x="523" y="153" width="3" height="6" fill="#f5843c"/>
<rect x="528" y="137" width="1" height="20" fill="#f5843c"/>
<rect x="527" y="140" width="3" height="9" fill="#f5843c"/>
<rect x="532" y="137" width="1" height="13" fill="#f5843c"/>
<rect x="531.5" y="138.5" width="2" height="10" fill="#3b4149" stroke="#f5843c" stroke-width="1"/>
<rect x="535" y="144" width="1" height="8" fill="#f5843c"/>
<rect x="534" y="148" width="3" height="3" fill="#f5843c"/>
<rect x="539" y="145" width="1" height="12" fill="#f5843c"/>
<rect x="538.5" y="146.5" width="2" height="6" fill="#3b4149" stroke="#f5843c" stroke-width="1"/>
<rect x="543" y="151" width="1" height="9" fill="#f5843c"/>
<rect x="542" y="152" width="3" height="3" fill="#f5843c"/>
<rect x="546" y="145" width="1" height="17" fill="#f5843c"/>
<rect x="545.5" y="152.5" width="2" height="3" fill="#3b4149" stroke="#f5843c" stroke-width="1"/>
<rect x="550" y="135" width="1" height="23" fill="#f5843c"/>
<rect x="549" y="152" width="3" height="3" fill="#f5843c"/>
<rect x="554" y="151" width="1" height="10" fill="#f5843c"/>
<rect x="553.5" y="152.5" width="2" height="7" fill="#3b4149" stroke="#f5843c" stroke-width="1"/>
<rect x="557" y="156" width="1" height="9" fill="#f5843c"/>
<rect x="556" y="157" width="3" height="2" fill="#f5843c"/>
<rect x="561" y="155" width="1" height="6" fill="#f5843c"/>
<rect x="560.5" y="156.5" width="2" height="2" fill="#3b4149" stroke="#f5843c" stroke-width="1"/>
<rect x="565" y="152" width="1" height="7" fill="#f5843c"/>
<rect x="564" y="154" width="3" height="3" fill="#f5843c"/>
<rect x="568" y="146" width="1" height="10" fill="#f5843c"/>
<rect x="567" y="148" width="3" height="7" fill="#f5843c"/>
<rect x="572" y="148" width="1" height="21" fill="#f5843c"/>
<rect x="571.5" y="149.5" width="2" height="15" fill="#3b4149" stroke="#f5843c" stroke-width="1"/>
<rect x="576" y="161" width="1" height="14" fill="#f5843c"/>
<rect x="575.5" y="162.5" width="2" height="12" fill="#3b4149" stroke="#f5843c" stroke-width="1"/>
<rect x="579" y="170" width="1" height="10" fill="#f5843c"/>
<rect x="578.5" y="171.5" width="2" height="7" fill="#3b4149" stroke="#f5843c" stroke-width="1"/>
<rect x="583" y="176" width="1" height="7" fill="#f5843c"/>
<rect x="582.5" y="177.5" width="2" height="5" fill="#3b4149" stroke="#f5843c" stroke-width="1"/>
<rect x="587" y="177" width="1" height="7" fill="#f5843c"/>
<rect x="586" y="180" width="3" height="3" fill="#f5843c"/>
<rect x="590" y="177" width="1" height="20" fill="#f5843c"/>
<rect x="589.5" y="178.5" width="2" height="17" fill="#3b4149" stroke="#f5843c" stroke-width="1"/>
<rect x="594" y="182" width="1" height="17" fill="#f5843c"/>
<rect x="593.5" y="192.5" width="2" height="5" fill="#3b4149" stroke="#f5843c" stroke-width="1"/>
<rect x="598" y="194" width="1" height="15" fill="#f5843c"/>
<rect x="597.5" y="195.5" width="2" height="13" fill="#3b4149" stroke="#f5843c" stroke-width="1"/>
<rect x="601" y="203" width="1" height="9" fill="#f5843c"/>
<rect x="600" y="205" width="3" height="2" fill="#f5843c"/>
<rect x="605" y="200" width="1" height="10" fill="#f5843c"/>
<rect x="604.5" y="204.5" width="2" height="4" fill="#3b4149" stroke="#f5843c" stroke-width="1"/>
<rect x="609" y="199" width="1" height="10" fill="#f5843c"/>
<rect x="608" y="206" width="3" height="3" fill="#f5843c"/>
<rect x="612" y="203" width="1" height="15" fill="#f5843c"/>
<rect x="611.5" y="206.5" width="2" height="10" fill="#3b4149" stroke="#f5843c" stroke-width="1"/>
<rect x="616" y="203" width="1" height="28" fill="#f5843c"/>
<rect x="615.5" y="208.5" width="2" height="22" fill="#3b4149" stroke="#f5843c" stroke-width="1"/>
<rect x="620" y="218" width="1" height="20" fill="#f5843c"/>
<rect x="619" y="220" width="3" height="9" fill="#f5843c"/>
<rect x="623" y="216" width="1" height="8" fill="#f5843c"/>
<rect x="622" y="218" width="3" height="3" fill="#f5843c"/>
<rect x="627" y="215" width="1" height="9" fill="#f5843c"/>
<rect x="626.5" y="219.5" width="2" height="1" fill="#3b4149" stroke="#f5843c" stroke-width="1"/>
<rect x="631" y="216" width="1" height="11" fill="#f5843c"/>
<rect x="630.5" y="217.5" width="2" height="5" fill="#3b4149" stroke="#f5843c" stroke-width="1"/>
<rect x="634" y="216" width="1" height="15" fill="#f5843c"/>
<rect x="633" y="220" width="3" height="3" fill="#f5843c"/>
<rect x="638" y="216" width="1" height="14" fill="#f5843c"/>
<rect x="637" y="218" width="3" height="3" fill="#f5843c"/>
<rect x="642" y="196" width="1" height="21" fill="#f5843c"/>
<rect x="641" y="198" width="3" height="19" fill="#f5843c"/>
<rect x="645" y="190" width="1" height="9" fill="#f5843c"/>
<rect x="644" y="192" width="3" height="6" fill="#f5843c"/>
<rect x="649" y="192" width="1" height="7" fill="#f5843c"/>
<rect x="648.5" y="193.5" width="2" height="5" fill="#3b4149" stroke="#f5843c" stroke-width="1"/>
<rect x="653" y="189" width="1" height="12" fill="#f5843c"/>
<rect x="652" y="193" width="3" height="6" fill="#f5843c"/>
<rect x="656" y="177" width="1" height="17" fill="#f5843c"/>
<rect x="655" y="189" width="3" height="4" fill="#f5843c"/>
<rect x="660" y="172" width="1" height="17" fill="#f5843c"/>
<rect x="659" y="176" width="3" height="13" fill="#f5843c"/>
<rect x="664" y="169" width="1" height="15" fill="#f5843c"/>
<rect x="663" y="173" width="3" height="10" fill="#f5843c"/>
<rect x="668" y="172" width="1" height="8" fill="#f5843c"/>
<rect x="667" y="175" width="3" height="2" fill="#f5843c"/>
<rect x="671" y="173" width="1" height="7" fill="#f5843c"/>
<rect x="670.5" y="174.5" width="2" height="2" fill="#3b4149" stroke="#f5843c" stroke-width="1"/>
<rect x="675" y="173" width="1" height="10" fill="#f5843c"/>
<rect x="674.5" y="174.5" width="2" height="7" fill="#3b4149" stroke="#f5843c" stroke-width="1"/>
<rect x="679" y="177" width="1" height="13" fill="#f5843c"/>
<rect x="678.5" y="178.5" width="2" height="10" fill="#3b4149" stroke="#f5843c" stroke-width="1"/>
<rect x="682" y="176" width="1" height="17" fill="#f5843c"/>
<rect x="681" y="177" width="3" height="12" fill="#f5843c"/>
<rect x="686" y="175" width="1" height="8" fill="#f5843c"/>
<rect x="685.5" y="176.5" width="2" height="5" fill="#3b4149" stroke="#f5843c" stroke-width="1"/>
<rect x="690" y="178" width="1" height="7" fill="#f5843c"/>
<rect x="689.5" y="179.5" width="2" height="4" fill="#3b4149" stroke="#f5843c" stroke-width="1"/>
<rect x="693" y="179" width="1" height="7" fill="#f5843c"/>
<rect x="692" y="181" width="3" height="2" fill="#f5843c"/>
<rect x="697" y="179" width="1" height="7" fill="#f5843c"/>
<rect x="696.5" y="181.5" width="2" height="1" fill="#3b4149" stroke="#f5843c" stroke-width="1"/>
<rect x="701" y="176" width="1" height="11" fill="#f5843c"/>
<rect x="700" y="178" width="3" height="3" fill="#f5843c"/>
<rect x="704" y="166" width="1" height="12" fill="#f5843c"/>
<rect x="703" y="174" width="3" height="3" fill="#f5843c"/>
<rect x="708" y="155" width="1" height="20" fill="#f5843c"/>
<rect x="707" y="158" width="3" height="16" fill="#f5843c"/>
<rect x="712" y="156" width="1" height="7" fill="#f5843c"/>
<rect x="711.5" y="158.5" width="2" height="3" fill="#3b4149" stroke="#f5843c" stroke-width="1"/>
<rect x="715" y="156" width="1" height="7" fill="#f5843c"/>
<rect x="714" y="158" width="3" height="3" fill="#f5843c"/>
<rect x="719" y="156" width="1" height="6" fill="#f5843c"/>
<rect x="718.5" y="158.5" width="2" height="2" fill="#3b4149" stroke="#f5843c" stroke-width="1"/>
<rect x="723" y="156" width="1" height="21" fill="#f5843c"/>
<rect x="722.5" y="157.5" width="2" height="18" fill="#3b4149" stroke="#f5843c" stroke-width="1"/>
<rect x="726" y="158" width="1" height="17" fill="#f5843c"/>
<rect x="725" y="158" width="3" height="16" fill="#f5843c"/>
<rect x="730" y="139" width="1" height="28" fill="#f5843c"/>
<rect x="729" y="140" width="3" height="19" fill="#f5843c"/>
<rect x="734" y="136" width="1" height="8" fill="#f5843c"/>
<rect x="733" y="140" width="3" height="2" fill="#f5843c"/>
<rect x="737" y="137" width="1" height="8" fill="#f5843c"/>
<rect x="736.5" y="141.5" width="2" height="1" fill="#3b4149" stroke="#f5843c" stroke-width="1"/>
<rect x="741" y="137" width="1" height="9" fill="#f5843c"/>
<rect x="740.5" y="142.5" width="2" height="2" fill="#3b4149" stroke="#f5843c" stroke-width="1"/>
<rect x="745" y="136" width="1" height="12" fill="#f5843c"/>
<rect x="744" y="138" width="3" height="7" fill="#f5843c"/>
<rect x="748" y="135" width="1" height="12" fill="#f5843c"/>
<rect x="747.5" y="136.5" width="2" height="9" fill="#3b4149" stroke="#f5843c" stroke-width="1"/>
<rect x="752" y="138" width="1" height="16" fill="#f5843c"/>
<rect x="751.5" y="139.5" width="2" height="5" fill="#3b4149" stroke="#f5843c" stroke-width="1"/>
<rect x="756" y="131" width="1" height="23" fill="#f5843c"/>
<rect x="755" y="134" width="3" height="7" fill="#f5843c"/>
<rect x="759" y="132" width="1" height="5" fill="#f5843c"/>
<rect x="758" y="133" width="3" height="4" fill="#f5843c"/>
<rect x="763" y="126" width="1" height="10" fill="#f5843c"/>
<rect x="762" y="127" width="3" height="8" fill="#f5843c"/>
<rect x="767" y="113" width="1" height="16" fill="#f5843c"/>
<rect x="766" y="118" width="3" height="8" fill="#f5843c"/>
<rect x="770" y="114" width="1" height="8" fill="#f5843c"/>
<rect x="769" y="117" width="3" height="2" fill="#f5843c"/>
<rect x="774" y="109" width="1" height="11" fill="#f5843c"/>
<rect x="773.5" y="116.5" width="2" height="2" fill="#3b4149" stroke="#f5843c" stroke-width="1"/>
<rect x="778" y="113" width="1" height="6" fill="#f5843c"/>
<rect x="777" y="117" width="3" height="2" fill="#f5843c"/>
<rect x="781" y="113" width="1" height="9" fill="#f5843c"/>
<rect x="780.5" y="116.5" width="2" height="4" fill="#3b4149" stroke="#f5843c" stroke-width="1"/>
<rect x="785" y="116" width="1" height="7" fill="#f5843c"/>
<rect x="784.5" y="117.5" width="2" height="3" fill="#3b4149" stroke="#f5843c" stroke-width="1"/>
<rect x="789" y="110" width="1" height="15" fill="#f5843c"/>
<rect x="788" y="112" width="3" height="9" fill="#f5843c"/>
<rect x="792" y="108" width="1" height="14" fill="#f5843c"/>
<rect x="791.5" y="111.5" width="2" height="9" fill="#3b4149" stroke="#f5843c" stroke-width="1"/>
<rect x="796" y="116" width="1" height="20" fill="#f5843c"/>
<rect x="795.5" y="121.5" width="2" height="13" fill="#3b4149" stroke="#f5843c" stroke-width="1"/>
<rect x="800" y="131" width="1" height="10" fill="#f5843c"/>
<rect x="799" y="132" width="3" height="2" fill="#f5843c"/>
<rect x="803" y="132" width="1" height="7" fill="#f5843c"/>
<rect x="802.5" y="132.5" width="2" height="2" fill="#3b4149" stroke="#f5843c" stroke-width="1"/>
<rect x="807" y="133" width="1" height="8" fill="#f5843c"/>
<rect x="806" y="134" width="3" height="2" fill="#f5843c"/>
<rect x="811" y="125" width="1" height="12" fill="#f5843c"/>
<rect x="810" y="130" width="3" height="4" fill="#f5843c"/>
<rect x="814" y="127" width="1" height="14" fill="#f5843c"/>
<rect x="813.5" y="129.5" width="2" height="6" fill="#3b4149" stroke="#f5843c" stroke-width="1"/>
<rect x="818" y="129" width="1" height="15" fill="#f5843c"/>
<rect x="817.5" y="134.5" width="2" height="5" fill="#3b4149" stroke="#f5843c" stroke-width="1"/>
<rect x="822" y="135" width="1" height="8" fill="#f5843c"/>
<rect x="821.5" y="136.5" width="2" height="4" fill="#3b4149" stroke="#f5843c" stroke-width="1"/>
<rect x="825" y="135" width="1" height="8" fill="#f5843c"/>
<rect x="824" y="136" width="3" height="3" fill="#f5843c"/>
<rect x="829" y="134" width="1" height="7" fill="#f5843c"/>
<rect x="828" y="134" width="3" height="2" fill="#f5843c"/>
<rect x="833" y="127" width="1" height="14" fill="#f5843c"/>
<rect x="832" y="132" width="3" height="4" fill="#f5843c"/>
<rect x="836" y="122" width="1" height="13" fill="#f5843c"/>
<rect x="835" y="129" width="3" height="2" fill="#f5843c"/>
<rect x="840" y="127" width="1" height="14" fill="#f5843c"/>
<rect x="839.5" y="129.5" width="2" height="1" fill="#3b4149" stroke="#f5843c" stroke-width="1"/>
<rect x="844" y="128" width="1" height="7" fill="#f5843c"/>
<rect x="843.5" y="130.5" width="2" height="1" fill="#3b4149" stroke="#f5843c" stroke-width="1"/>
<rect x="847" y="129" width="1" height="7" fill="#f5843c"/>
<rect x="846.5" y="130.5" width="2" height="5" fill="#3b4149" stroke="#f5843c" stroke-width="1"/>
<rect x="851" y="125" width="1" height="9" fill="#f5843c"/>
<rect x="850" y="128" width="3" height="5" fill="#f5843c"/>
<rect x="855" y="120" width="1" height="11" fill="#f5843c"/>
<rect x="854" y="126" width="3" height="2" fill="#f5843c"/>
<rect x="858" y="123" width="1" height="6" fill="#f5843c"/>
<rect x="857" y="126" width="3" height="2" fill="#f5843c"/>
<polyline points="18.0,57.0 19.8,57.5 22.4,58.2 25.4,59.0 28.7,59.8 32.0,60.5 35.0,61.0 37.8,61.3 40.7,61.4 43.6,61.3 46.4,61.3 49.2,61.3 52.0,61.5 54.7,61.8 57.4,62.2 60.1,62.7 62.8,63.2 65.4,63.6 68.0,64.0 70.6,64.2 73.3,64.4 75.9,64.5 78.5,64.7 80.9,64.8 83.0,65.0 84.9,65.3 86.6,65.5 88.1,65.8 89.5,66.2 90.8,66.5 92.0,66.8 93.0,67.1 93.8,67.4 94.5,67.7 95.1,68.0 95.9,68.4 97.0,68.7 98.3,69.0 99.9,69.3 101.6,69.7 103.3,70.0 105.0,70.5 106.7,71.1 108.3,71.8 109.9,72.7 111.5,73.7 113.1,74.7 114.7,75.8 116.3,76.8 117.9,77.9 119.5,79.0 121.1,80.1 122.7,81.2 124.4,82.4 126.0,83.5 127.6,84.6 129.1,85.6 130.7,86.5 132.3,87.6 134.0,88.7 136.0,90.0 138.2,91.5 140.5,93.2 142.9,95.0 145.5,96.8 148.2,98.5 150.9,99.9 153.8,101.0 157.0,101.9 160.3,102.7 163.6,103.4 166.6,104.1 169.4,104.8 171.8,105.5 174.0,106.2 175.9,106.9 177.8,107.5 179.7,108.0 181.7,108.5 183.7,108.9 185.8,109.1 187.8,109.3 189.9,109.5 191.9,109.6 194.0,109.8 195.9,110.0 197.7,110.2 199.4,110.4 201.4,110.6 203.6,110.8 206.4,111.0 209.9,111.2 213.9,111.4 218.3,111.6 222.8,111.9 227.1,112.3 231.0,112.8 234.4,113.4 237.5,114.1 240.3,114.9 243.3,115.8 246.4,116.8 250.0,118.0 254.0,119.5 258.4,121.2 263.1,123.1 267.8,124.9 272.5,126.6 277.0,128.0 281.5,129.0 286.1,129.9 290.6,130.5 295.0,131.1 299.2,131.5 303.0,132.0 306.3,132.3 309.2,132.5 311.9,132.6 314.5,132.8 317.1,133.0 320.0,133.6 323.1,134.5 326.3,135.6 329.5,136.9 332.8,138.2 336.1,139.5 339.4,140.6 342.4,141.6 345.0,142.6 347.6,143.5 350.6,144.4 354.2,145.3 358.9,146.1 365.0,146.9 372.3,147.5 380.2,148.2 388.4,148.9 396.2,149.5 403.3,150.3 409.6,151.2 415.7,152.1 421.4,153.1 426.8,154.1 431.9,155.0 436.7,155.8 441.0,156.5 444.7,157.2 448.1,157.9 451.5,158.4 455.0,158.7 458.9,158.6 463.2,158.1 467.8,157.2 472.5,156.1 477.2,154.9 482.0,153.8 486.7,153.0 491.3,152.5 495.9,152.2 500.5,151.9 505.2,151.8 509.8,151.7 514.4,151.7 519.0,151.8 523.7,152.0 528.3,152.3 532.9,152.6 537.6,152.8 542.2,153.0 546.8,152.9 551.5,152.7 556.1,152.4 560.7,152.2 565.4,152.4 570.0,153.0 574.6,154.2 579.3,155.9 583.9,157.9 588.5,160.1 593.2,162.2 597.8,164.2 602.6,166.1 607.6,168.2 612.5,170.2 617.3,172.1 621.7,173.9 625.6,175.3 628.8,176.4 631.4,177.3 633.6,177.9 635.7,178.5 637.7,178.9 640.0,179.4 642.3,179.8 644.3,180.2 646.3,180.5 648.6,180.7 651.5,180.9 655.0,181.0 659.4,181.2 664.6,181.4 670.3,181.5 676.3,181.5 682.2,181.4 688.0,181.0 693.7,180.3 699.6,179.4 705.4,178.3 711.2,177.1 716.8,175.8 722.0,174.7 727.0,173.6 731.8,172.4 736.4,171.2 740.7,170.0 744.6,169.0 748.0,168.0 750.8,167.2 752.9,166.5 754.7,165.8 756.3,165.3 758.0,164.7 760.0,164.0 762.3,163.3 764.7,162.7 767.2,162.0 769.8,161.3 772.4,160.6 775.0,159.7 777.6,158.7 780.1,157.5 782.6,156.3 785.3,155.1 788.0,154.0 791.0,153.0 794.2,152.1 797.7,151.3 801.3,150.6 804.9,150.0 808.5,149.4 812.0,149.0 815.5,148.8 819.0,148.7 822.5,148.8 825.8,148.9 828.9,148.9 831.6,148.6 833.8,148.1 835.4,147.3 836.9,146.5 838.2,145.7 839.7,144.9 841.5,144.3 843.8,143.9 846.5,143.6 849.4,143.4 852.1,143.2 854.4,143.1 856.0,143.0" fill="none" stroke="#b02828" stroke-width="1.6"/>
<polyline points="18.0,59.7 18.8,59.8 19.9,59.9 21.2,60.1 22.7,60.2 24.1,60.4 25.6,60.6 27.1,60.8 28.7,61.0 30.4,61.2 32.1,61.4 33.6,61.7 35.0,62.0 36.1,62.4 37.0,62.8 37.8,63.2 38.6,63.6 39.5,64.0 40.8,64.4 42.4,64.7 44.3,65.0 46.3,65.2 48.4,65.4 50.4,65.6 52.3,65.8 54.0,66.0 55.8,66.1 57.4,66.1 59.0,66.3 60.5,66.5 61.8,66.8 62.9,67.3 63.9,67.9 64.7,68.7 65.5,69.4 66.5,70.1 67.6,70.6 69.0,71.0 70.6,71.3 72.3,71.5 74.1,71.7 75.7,71.8 77.1,72.0 78.2,72.2 79.2,72.4 80.0,72.6 80.8,72.8 81.8,72.9 82.9,73.0 84.3,73.0 86.0,72.9 87.8,72.7 89.6,72.6 91.2,72.5 92.4,72.5 93.2,72.6 93.6,72.6 93.8,72.7 94.0,72.9 94.5,73.3 95.3,74.0 96.6,75.0 98.2,76.3 100.1,77.7 102.0,79.3 104.0,81.0 105.8,82.6 107.6,84.2 109.3,86.0 111.1,87.8 112.9,89.6 114.6,91.3 116.3,93.0 118.0,94.6 119.7,96.0 121.4,97.5 123.0,98.9 124.6,100.3 126.0,101.7 127.2,103.0 128.2,104.2 129.1,105.5 130.0,106.7 131.0,108.1 132.3,109.8 133.9,111.8 135.8,114.1 137.8,116.6 139.8,119.1 141.7,121.3 143.5,123.3 145.0,125.0 146.4,126.5 147.8,127.9 149.1,129.1 150.5,130.0 152.0,130.7 153.7,131.0 155.5,130.8 157.4,130.4 159.3,129.9 161.2,129.6 163.2,129.5 165.2,129.8 167.2,130.2 169.3,130.8 171.4,131.4 173.5,131.8 175.6,132.0 177.7,131.9 179.7,131.6 181.8,131.2 183.8,130.7 185.9,130.1 187.9,129.5 189.9,128.9 192.0,128.1 194.0,127.4 196.0,126.6 198.1,125.9 200.2,125.2 202.4,124.6 204.7,124.0 207.0,123.4 209.3,122.9 211.6,122.6 213.8,122.3 215.9,122.2 218.0,122.2 220.0,122.3 222.0,122.5 224.1,122.8 226.2,123.0 228.3,123.2 230.4,123.3 232.4,123.5 234.7,123.8 237.2,124.4 240.0,125.2 243.3,126.4 246.9,127.9 250.9,129.6 254.9,131.4 259.0,133.3 263.0,135.0 267.0,136.7 271.0,138.6 275.0,140.5 279.0,142.3 283.0,143.8 287.0,145.0 290.9,145.7 294.9,146.0 298.8,146.1 302.6,146.2 306.4,146.4 310.0,147.0 313.6,148.0 317.2,149.3 320.7,150.8 324.0,152.4 327.2,153.8 330.0,155.0 332.4,156.0 334.5,156.8 336.3,157.6 338.1,158.3 339.9,159.0 342.0,159.7 344.3,160.5 346.7,161.5 349.1,162.4 351.7,163.2 354.3,163.8 357.0,164.0 359.8,163.8 362.7,163.2 365.7,162.4 368.7,161.5 371.8,160.6 375.0,159.7 378.2,158.8 381.5,157.7 384.9,156.6 388.3,155.6 391.6,154.9 395.0,154.7 398.3,155.1 401.6,155.9 404.8,157.1 408.1,158.3 411.5,159.6 415.0,160.7 418.7,161.7 422.6,162.7 426.5,163.7 430.4,164.6 434.3,165.4 438.0,166.0 441.6,166.5 445.1,167.0 448.6,167.4 451.9,167.6 455.0,167.5 458.0,167.0 460.7,166.0 463.1,164.5 465.4,162.8 467.6,160.9 469.8,159.3 472.0,158.0 474.2,157.1 476.3,156.5 478.4,156.0 480.6,155.6 482.7,155.2 485.0,154.7 487.3,154.0 489.7,153.1 492.1,152.2 494.6,151.5 497.2,150.9 500.0,150.7 503.0,151.0 506.3,151.7 509.7,152.6 513.1,153.5 516.6,154.3 520.0,154.7 523.3,154.7 526.7,154.5 530.0,154.0 533.3,153.6 536.7,153.2 540.0,153.0 543.4,153.0 546.9,153.1 550.4,153.3 553.9,153.6 557.1,153.8 560.0,154.0 562.6,154.1 565.1,154.2 567.3,154.2 569.4,154.3 571.3,154.4 573.0,154.7 574.5,155.1 575.7,155.5 576.7,155.9 577.7,156.5 578.7,157.2 580.0,158.0 581.5,159.0 583.1,160.1 584.9,161.4 586.6,162.7 588.3,164.1 590.0,165.3 591.6,166.5 593.2,167.6 594.7,168.7 596.2,169.9 597.8,171.1 599.3,172.3 600.8,173.6 602.3,174.9 603.8,176.3 605.3,177.7 606.9,179.2 608.5,180.7 610.3,182.3 612.1,184.0 614.0,185.8 616.0,187.5 617.8,189.1 619.6,190.6 621.2,191.9 622.8,193.1 624.3,194.2 625.8,195.2 627.4,196.1 629.0,197.0 630.8,197.9 632.7,198.7 634.6,199.4 636.5,200.1 638.3,200.6 640.0,201.0 641.4,201.3 642.4,201.6 643.4,201.8 644.6,201.7 646.0,201.5 648.0,201.0 650.6,200.1 653.5,198.9 656.8,197.4 660.4,195.9 664.1,194.4 668.0,193.0 672.1,191.8 676.5,190.8 681.1,189.7 685.7,188.6 690.4,187.4 695.0,186.0 699.6,184.4 704.3,182.6 708.9,180.8 713.5,178.8 717.9,176.8 722.0,174.7 725.7,172.5 729.2,170.2 732.4,167.8 735.6,165.4 738.7,163.1 742.0,161.0 745.4,159.1 748.9,157.4 752.4,155.8 755.9,154.3 759.1,152.7 762.0,151.0 764.6,149.1 766.8,147.1 768.9,145.1 770.9,143.1 772.9,141.3 775.0,139.7 777.0,138.4 778.7,137.3 780.4,136.3 782.4,135.6 785.0,134.9 788.4,134.4 792.8,134.1 797.9,134.1 803.7,134.2 809.7,134.3 815.8,134.4 821.7,134.4 827.9,134.2 834.8,133.9 841.7,133.5 848.1,133.1 853.6,132.8 857.5,132.6" fill="none" stroke="#1212a8" stroke-width="1.3"/>
<rect x="16" y="112" width="870" height="2.2" fill="#b42a2e"/>
<rect x="16" y="123.8" width="870" height="1.4" fill="#f2f2f2"/>
<rect x="16" y="146" width="870" height="1" fill="#1aa81a"/><rect x="16" y="147" width="870" height="1.2" fill="#52dc52"/>
<line x1="25.5" y1="283.5" x2="25.5" y2="284.7" stroke="#b82a2a" stroke-width="1.8" stroke-opacity="0.85"/>
<line x1="28.5" y1="283.5" x2="28.5" y2="285.1" stroke="#b82a2a" stroke-width="1.8" stroke-opacity="0.85"/>
<line x1="32.5" y1="283.5" x2="32.5" y2="285.5" stroke="#b82a2a" stroke-width="1.8" stroke-opacity="0.85"/>
<line x1="36.5" y1="283.5" x2="36.5" y2="285.7" stroke="#b82a2a" stroke-width="1.8" stroke-opacity="0.85"/>
<line x1="39.5" y1="283.5" x2="39.5" y2="285.8" stroke="#b82a2a" stroke-width="1.8" stroke-opacity="0.85"/>
<line x1="43.5" y1="283.5" x2="43.5" y2="285.7" stroke="#b82a2a" stroke-width="1.8" stroke-opacity="0.85"/>
<line x1="47.5" y1="283.5" x2="47.5" y2="285.6" stroke="#b82a2a" stroke-width="1.8" stroke-opacity="0.85"/>
<line x1="50.5" y1="283.5" x2="50.5" y2="285.5" stroke="#b82a2a" stroke-width="1.8" stroke-opacity="0.85"/>
<line x1="54.5" y1="283.5" x2="54.5" y2="285.3" stroke="#b82a2a" stroke-width="1.8" stroke-opacity="0.85"/>
<line x1="58.5" y1="283.5" x2="58.5" y2="285.3" stroke="#b82a2a" stroke-width="1.8" stroke-opacity="0.85"/>
<line x1="61.5" y1="283.5" x2="61.5" y2="285.2" stroke="#b82a2a" stroke-width="1.8" stroke-opacity="0.85"/>
<line x1="65.5" y1="283.5" x2="65.5" y2="285.2" stroke="#b82a2a" stroke-width="1.8" stroke-opacity="0.85"/>
<line x1="69.5" y1="283.5" x2="69.5" y2="285.2" stroke="#b82a2a" stroke-width="1.8" stroke-opacity="0.85"/>
<line x1="72.5" y1="283.5" x2="72.5" y2="285.2" stroke="#b82a2a" stroke-width="1.8" stroke-opacity="0.85"/>
<line x1="76.5" y1="283.5" x2="76.5" y2="285.2" stroke="#b82a2a" stroke-width="1.8" stroke-opacity="0.85"/>
<line x1="80.5" y1="283.5" x2="80.5" y2="285.2" stroke="#b82a2a" stroke-width="1.8" stroke-opacity="0.85"/>
<line x1="83.5" y1="283.5" x2="83.5" y2="284.8" stroke="#b82a2a" stroke-width="1.8" stroke-opacity="0.85"/>
<line x1="98.5" y1="283.5" x2="98.5" y2="285.5" stroke="#b82a2a" stroke-width="1.8" stroke-opacity="0.85"/>
<line x1="102.5" y1="283.5" x2="102.5" y2="286.6" stroke="#b82a2a" stroke-width="1.8" stroke-opacity="0.85"/>
<line x1="105.5" y1="283.5" x2="105.5" y2="287.4" stroke="#b82a2a" stroke-width="1.8" stroke-opacity="0.85"/>
<line x1="109.5" y1="283.5" x2="109.5" y2="288.4" stroke="#b82a2a" stroke-width="1.8" stroke-opacity="0.85"/>
<line x1="113.5" y1="283.5" x2="113.5" y2="288.9" stroke="#b82a2a" stroke-width="1.8" stroke-opacity="0.85"/>
<line x1="116.5" y1="283.5" x2="116.5" y2="288.7" stroke="#b82a2a" stroke-width="1.8" stroke-opacity="0.85"/>
<line x1="120.5" y1="283.5" x2="120.5" y2="288.6" stroke="#b82a2a" stroke-width="1.8" stroke-opacity="0.85"/>
<line x1="124.5" y1="283.5" x2="124.5" y2="288.4" stroke="#b82a2a" stroke-width="1.8" stroke-opacity="0.85"/>
<line x1="127.5" y1="283.5" x2="127.5" y2="288.4" stroke="#b82a2a" stroke-width="1.8" stroke-opacity="0.85"/>
<line x1="131.5" y1="283.5" x2="131.5" y2="289.0" stroke="#b82a2a" stroke-width="1.8" stroke-opacity="0.85"/>
<line x1="135.5" y1="283.5" x2="135.5" y2="289.5" stroke="#b82a2a" stroke-width="1.8" stroke-opacity="0.85"/>
<line x1="138.5" y1="283.5" x2="138.5" y2="289.9" stroke="#b82a2a" stroke-width="1.8" stroke-opacity="0.85"/>
<line x1="142.5" y1="283.5" x2="142.5" y2="290.0" stroke="#b82a2a" stroke-width="1.8" stroke-opacity="0.85"/>
<line x1="146.5" y1="283.5" x2="146.5" y2="288.1" stroke="#b82a2a" stroke-width="1.8" stroke-opacity="0.85"/>
<line x1="149.5" y1="283.5" x2="149.5" y2="286.6" stroke="#b82a2a" stroke-width="1.8" stroke-opacity="0.85"/>
<line x1="153.5" y1="283.5" x2="153.5" y2="284.8" stroke="#b82a2a" stroke-width="1.8" stroke-opacity="0.85"/>
<line x1="160.5" y1="283.5" x2="160.5" y2="281.7" stroke="#b82a2a" stroke-width="1.8" stroke-opacity="0.85"/>
<line x1="164.5" y1="283.5" x2="164.5" y2="280.4" stroke="#b82a2a" stroke-width="1.8" stroke-opacity="0.85"/>
<line x1="168.5" y1="283.5" x2="168.5" y2="279.2" stroke="#b82a2a" stroke-width="1.8" stroke-opacity="0.85"/>
<line x1="171.5" y1="283.5" x2="171.5" y2="279.9" stroke="#b82a2a" stroke-width="1.8" stroke-opacity="0.85"/>
<line x1="175.5" y1="283.5" x2="175.5" y2="280.6" stroke="#b82a2a" stroke-width="1.8" stroke-opacity="0.85"/>
<line x1="179.5" y1="283.5" x2="179.5" y2="280.0" stroke="#b82a2a" stroke-width="1.8" stroke-opacity="0.85"/>
<line x1="182.5" y1="283.5" x2="182.5" y2="279.7" stroke="#b82a2a" stroke-width="1.8" stroke-opacity="0.85"/>
<line x1="186.5" y1="283.5" x2="186.5" y2="279.1" stroke="#b82a2a" stroke-width="1.8" stroke-opacity="0.85"/>
<line x1="190.5" y1="283.5" x2="190.5" y2="278.6" stroke="#b82a2a" stroke-width="1.8" stroke-opacity="0.85"/>
<line x1="193.5" y1="283.5" x2="193.5" y2="278.1" stroke="#b82a2a" stroke-width="1.8" stroke-opacity="0.85"/>
<line x1="197.5" y1="283.5" x2="197.5" y2="277.5" stroke="#b82a2a" stroke-width="1.8" stroke-opacity="0.85"/>
<line x1="201.5" y1="283.5" x2="201.5" y2="278.0" stroke="#b82a2a" stroke-width="1.8" stroke-opacity="0.85"/>
<line x1="204.5" y1="283.5" x2="204.5" y2="279.0" stroke="#b82a2a" stroke-width="1.8" stroke-opacity="0.85"/>
<line x1="208.5" y1="283.5" x2="208.5" y2="280.0" stroke="#b82a2a" stroke-width="1.8" stroke-opacity="0.85"/>
<line x1="212.5" y1="283.5" x2="212.5" y2="280.8" stroke="#b82a2a" stroke-width="1.8" stroke-opacity="0.85"/>
<line x1="215.5" y1="283.5" x2="215.5" y2="281.8" stroke="#b82a2a" stroke-width="1.8" stroke-opacity="0.85"/>
<line x1="234.5" y1="283.5" x2="234.5" y2="284.8" stroke="#b82a2a" stroke-width="1.8" stroke-opacity="0.85"/>
<line x1="238.5" y1="283.5" x2="238.5" y2="285.1" stroke="#b82a2a" stroke-width="1.8" stroke-opacity="0.85"/>
<line x1="241.5" y1="283.5" x2="241.5" y2="285.2" stroke="#b82a2a" stroke-width="1.8" stroke-opacity="0.85"/>
<line x1="245.5" y1="283.5" x2="245.5" y2="285.4" stroke="#b82a2a" stroke-width="1.8" stroke-opacity="0.85"/>
<line x1="249.5" y1="283.5" x2="249.5" y2="285.7" stroke="#b82a2a" stroke-width="1.8" stroke-opacity="0.85"/>
<line x1="252.5" y1="283.5" x2="252.5" y2="286.0" stroke="#b82a2a" stroke-width="1.8" stroke-opacity="0.85"/>
<line x1="256.5" y1="283.5" x2="256.5" y2="286.3" stroke="#b82a2a" stroke-width="1.8" stroke-opacity="0.85"/>
<line x1="260.5" y1="283.5" x2="260.5" y2="286.2" stroke="#b82a2a" stroke-width="1.8" stroke-opacity="0.85"/>
<line x1="263.5" y1="283.5" x2="263.5" y2="286.1" stroke="#b82a2a" stroke-width="1.8" stroke-opacity="0.85"/>
<line x1="267.5" y1="283.5" x2="267.5" y2="286.0" stroke="#b82a2a" stroke-width="1.8" stroke-opacity="0.85"/>
<line x1="271.5" y1="283.5" x2="271.5" y2="285.9" stroke="#b82a2a" stroke-width="1.8" stroke-opacity="0.85"/>
<line x1="274.5" y1="283.5" x2="274.5" y2="285.9" stroke="#b82a2a" stroke-width="1.8" stroke-opacity="0.85"/>
<line x1="278.5" y1="283.5" x2="278.5" y2="285.9" stroke="#b82a2a" stroke-width="1.8" stroke-opacity="0.85"/>
<line x1="282.5" y1="283.5" x2="282.5" y2="286.2" stroke="#b82a2a" stroke-width="1.8" stroke-opacity="0.85"/>
<line x1="285.5" y1="283.5" x2="285.5" y2="286.4" stroke="#b82a2a" stroke-width="1.8" stroke-opacity="0.85"/>
<line x1="289.5" y1="283.5" x2="289.5" y2="286.1" stroke="#b82a2a" stroke-width="1.8" stroke-opacity="0.85"/>
<line x1="293.5" y1="283.5" x2="293.5" y2="285.9" stroke="#b82a2a" stroke-width="1.8" stroke-opacity="0.85"/>
<line x1="296.5" y1="283.5" x2="296.5" y2="285.8" stroke="#b82a2a" stroke-width="1.8" stroke-opacity="0.85"/>
<line x1="300.5" y1="283.5" x2="300.5" y2="285.6" stroke="#b82a2a" stroke-width="1.8" stroke-opacity="0.85"/>
<line x1="304.5" y1="283.5" x2="304.5" y2="285.4" stroke="#b82a2a" stroke-width="1.8" stroke-opacity="0.85"/>
<line x1="307.5" y1="283.5" x2="307.5" y2="285.3" stroke="#b82a2a" stroke-width="1.8" stroke-opacity="0.85"/>
<line x1="311.5" y1="283.5" x2="311.5" y2="285.1" stroke="#b82a2a" stroke-width="1.8" stroke-opacity="0.85"/>
<line x1="315.5" y1="283.5" x2="315.5" y2="285.0" stroke="#b82a2a" stroke-width="1.8" stroke-opacity="0.85"/>
<line x1="318.5" y1="283.5" x2="318.5" y2="284.9" stroke="#b82a2a" stroke-width="1.8" stroke-opacity="0.85"/>
<line x1="322.5" y1="283.5" x2="322.5" y2="284.8" stroke="#b82a2a" stroke-width="1.8" stroke-opacity="0.85"/>
<line x1="326.5" y1="283.5" x2="326.5" y2="284.8" stroke="#b82a2a" stroke-width="1.8" stroke-opacity="0.85"/>
<line x1="329.5" y1="283.5" x2="329.5" y2="285.0" stroke="#b82a2a" stroke-width="1.8" stroke-opacity="0.85"/>
<line x1="333.5" y1="283.5" x2="333.5" y2="285.3" stroke="#b82a2a" stroke-width="1.8" stroke-opacity="0.85"/>
<line x1="337.5" y1="283.5" x2="337.5" y2="285.6" stroke="#b82a2a" stroke-width="1.8" stroke-opacity="0.85"/>
<line x1="340.5" y1="283.5" x2="340.5" y2="285.8" stroke="#b82a2a" stroke-width="1.8" stroke-opacity="0.85"/>
<line x1="344.5" y1="283.5" x2="344.5" y2="285.6" stroke="#b82a2a" stroke-width="1.8" stroke-opacity="0.85"/>
<line x1="348.5" y1="283.5" x2="348.5" y2="285.3" stroke="#b82a2a" stroke-width="1.8" stroke-opacity="0.85"/>
<line x1="351.5" y1="283.5" x2="351.5" y2="285.1" stroke="#b82a2a" stroke-width="1.8" stroke-opacity="0.85"/>
<line x1="355.5" y1="283.5" x2="355.5" y2="284.5" stroke="#b82a2a" stroke-width="1.8" stroke-opacity="0.85"/>
<line x1="370.5" y1="283.5" x2="370.5" y2="282.5" stroke="#b82a2a" stroke-width="1.8" stroke-opacity="0.85"/>
<line x1="373.5" y1="283.5" x2="373.5" y2="282.3" stroke="#b82a2a" stroke-width="1.8" stroke-opacity="0.85"/>
<line x1="377.5" y1="283.5" x2="377.5" y2="282.2" stroke="#b82a2a" stroke-width="1.8" stroke-opacity="0.85"/>
<line x1="381.5" y1="283.5" x2="381.5" y2="282.1" stroke="#b82a2a" stroke-width="1.8" stroke-opacity="0.85"/>
<line x1="384.5" y1="283.5" x2="384.5" y2="281.7" stroke="#b82a2a" stroke-width="1.8" stroke-opacity="0.85"/>
<line x1="388.5" y1="283.5" x2="388.5" y2="280.6" stroke="#b82a2a" stroke-width="1.8" stroke-opacity="0.85"/>
<line x1="392.5" y1="283.5" x2="392.5" y2="282.0" stroke="#b82a2a" stroke-width="1.8" stroke-opacity="0.85"/>
<line x1="395.5" y1="283.5" x2="395.5" y2="282.7" stroke="#b82a2a" stroke-width="1.8" stroke-opacity="0.85"/>
<line x1="410.5" y1="283.5" x2="410.5" y2="284.7" stroke="#b82a2a" stroke-width="1.8" stroke-opacity="0.85"/>
<line x1="414.5" y1="283.5" x2="414.5" y2="284.9" stroke="#b82a2a" stroke-width="1.8" stroke-opacity="0.85"/>
<line x1="417.5" y1="283.5" x2="417.5" y2="285.0" stroke="#b82a2a" stroke-width="1.8" stroke-opacity="0.85"/>
<line x1="421.5" y1="283.5" x2="421.5" y2="285.0" stroke="#b82a2a" stroke-width="1.8" stroke-opacity="0.85"/>
<line x1="425.5" y1="283.5" x2="425.5" y2="285.0" stroke="#b82a2a" stroke-width="1.8" stroke-opacity="0.85"/>
<line x1="428.5" y1="283.5" x2="428.5" y2="285.1" stroke="#b82a2a" stroke-width="1.8" stroke-opacity="0.85"/>
<line x1="432.5" y1="283.5" x2="432.5" y2="285.1" stroke="#b82a2a" stroke-width="1.8" stroke-opacity="0.85"/>
<line x1="436.5" y1="283.5" x2="436.5" y2="285.1" stroke="#b82a2a" stroke-width="1.8" stroke-opacity="0.85"/>
<line x1="439.5" y1="283.5" x2="439.5" y2="285.1" stroke="#b82a2a" stroke-width="1.8" stroke-opacity="0.85"/>
<line x1="443.5" y1="283.5" x2="443.5" y2="284.9" stroke="#b82a2a" stroke-width="1.8" stroke-opacity="0.85"/>
<line x1="447.5" y1="283.5" x2="447.5" y2="284.6" stroke="#b82a2a" stroke-width="1.8" stroke-opacity="0.85"/>
<line x1="450.5" y1="283.5" x2="450.5" y2="284.5" stroke="#b82a2a" stroke-width="1.8" stroke-opacity="0.85"/>
<line x1="454.5" y1="283.5" x2="454.5" y2="284.6" stroke="#b82a2a" stroke-width="1.8" stroke-opacity="0.85"/>
<line x1="458.5" y1="283.5" x2="458.5" y2="284.6" stroke="#b82a2a" stroke-width="1.8" stroke-opacity="0.85"/>
<line x1="465.5" y1="283.5" x2="465.5" y2="282.5" stroke="#b82a2a" stroke-width="1.8" stroke-opacity="0.85"/>
<line x1="469.5" y1="283.5" x2="469.5" y2="281.5" stroke="#b82a2a" stroke-width="1.8" stroke-opacity="0.85"/>
<line x1="473.5" y1="283.5" x2="473.5" y2="280.2" stroke="#b82a2a" stroke-width="1.8" stroke-opacity="0.85"/>
<line x1="476.5" y1="283.5" x2="476.5" y2="279.7" stroke="#b82a2a" stroke-width="1.8" stroke-opacity="0.85"/>
<line x1="480.5" y1="283.5" x2="480.5" y2="280.2" stroke="#b82a2a" stroke-width="1.8" stroke-opacity="0.85"/>
<line x1="484.5" y1="283.5" x2="484.5" y2="280.7" stroke="#b82a2a" stroke-width="1.8" stroke-opacity="0.85"/>
<line x1="487.5" y1="283.5" x2="487.5" y2="281.1" stroke="#b82a2a" stroke-width="1.8" stroke-opacity="0.85"/>
<line x1="491.5" y1="283.5" x2="491.5" y2="281.6" stroke="#b82a2a" stroke-width="1.8" stroke-opacity="0.85"/>
<line x1="495.5" y1="283.5" x2="495.5" y2="281.7" stroke="#b82a2a" stroke-width="1.8" stroke-opacity="0.85"/>
<line x1="498.5" y1="283.5" x2="498.5" y2="281.7" stroke="#b82a2a" stroke-width="1.8" stroke-opacity="0.85"/>
<line x1="502.5" y1="283.5" x2="502.5" y2="282.6" stroke="#b82a2a" stroke-width="1.8" stroke-opacity="0.85"/>
<line x1="513.5" y1="283.5" x2="513.5" y2="284.7" stroke="#b82a2a" stroke-width="1.8" stroke-opacity="0.85"/>
<line x1="517.5" y1="283.5" x2="517.5" y2="285.4" stroke="#b82a2a" stroke-width="1.8" stroke-opacity="0.85"/>
<line x1="520.5" y1="283.5" x2="520.5" y2="286.0" stroke="#b82a2a" stroke-width="1.8" stroke-opacity="0.85"/>
<line x1="524.5" y1="283.5" x2="524.5" y2="284.9" stroke="#b82a2a" stroke-width="1.8" stroke-opacity="0.85"/>
<line x1="528.5" y1="283.5" x2="528.5" y2="284.5" stroke="#b82a2a" stroke-width="1.8" stroke-opacity="0.85"/>
<line x1="531.5" y1="283.5" x2="531.5" y2="284.4" stroke="#b82a2a" stroke-width="1.8" stroke-opacity="0.85"/>
<line x1="535.5" y1="283.5" x2="535.5" y2="284.3" stroke="#b82a2a" stroke-width="1.8" stroke-opacity="0.85"/>
<line x1="546.5" y1="283.5" x2="546.5" y2="284.4" stroke="#b82a2a" stroke-width="1.8" stroke-opacity="0.85"/>
<line x1="550.5" y1="283.5" x2="550.5" y2="284.6" stroke="#b82a2a" stroke-width="1.8" stroke-opacity="0.85"/>
<line x1="553.5" y1="283.5" x2="553.5" y2="284.7" stroke="#b82a2a" stroke-width="1.8" stroke-opacity="0.85"/>
<line x1="557.5" y1="283.5" x2="557.5" y2="284.9" stroke="#b82a2a" stroke-width="1.8" stroke-opacity="0.85"/>
<line x1="561.5" y1="283.5" x2="561.5" y2="284.7" stroke="#b82a2a" stroke-width="1.8" stroke-opacity="0.85"/>
<line x1="564.5" y1="283.5" x2="564.5" y2="284.4" stroke="#b82a2a" stroke-width="1.8" stroke-opacity="0.85"/>
<line x1="572.5" y1="283.5" x2="572.5" y2="284.7" stroke="#b82a2a" stroke-width="1.8" stroke-opacity="0.85"/>
<line x1="575.5" y1="283.5" x2="575.5" y2="285.4" stroke="#b82a2a" stroke-width="1.8" stroke-opacity="0.85"/>
<line x1="579.5" y1="283.5" x2="579.5" y2="286.3" stroke="#b82a2a" stroke-width="1.8" stroke-opacity="0.85"/>
<line x1="583.5" y1="283.5" x2="583.5" y2="286.9" stroke="#b82a2a" stroke-width="1.8" stroke-opacity="0.85"/>
<line x1="586.5" y1="283.5" x2="586.5" y2="287.4" stroke="#b82a2a" stroke-width="1.8" stroke-opacity="0.85"/>
<line x1="590.5" y1="283.5" x2="590.5" y2="288.4" stroke="#b82a2a" stroke-width="1.8" stroke-opacity="0.85"/>
<line x1="594.5" y1="283.5" x2="594.5" y2="289.6" stroke="#b82a2a" stroke-width="1.8" stroke-opacity="0.85"/>
<line x1="597.5" y1="283.5" x2="597.5" y2="290.6" stroke="#b82a2a" stroke-width="1.8" stroke-opacity="0.85"/>
<line x1="601.5" y1="283.5" x2="601.5" y2="291.1" stroke="#b82a2a" stroke-width="1.8" stroke-opacity="0.85"/>
<line x1="605.5" y1="283.5" x2="605.5" y2="290.4" stroke="#b82a2a" stroke-width="1.8" stroke-opacity="0.85"/>
<line x1="608.5" y1="283.5" x2="608.5" y2="289.8" stroke="#b82a2a" stroke-width="1.8" stroke-opacity="0.85"/>
<line x1="612.5" y1="283.5" x2="612.5" y2="289.0" stroke="#b82a2a" stroke-width="1.8" stroke-opacity="0.85"/>
<line x1="616.5" y1="283.5" x2="616.5" y2="288.2" stroke="#b82a2a" stroke-width="1.8" stroke-opacity="0.85"/>
<line x1="619.5" y1="283.5" x2="619.5" y2="288.0" stroke="#b82a2a" stroke-width="1.8" stroke-opacity="0.85"/>
<line x1="623.5" y1="283.5" x2="623.5" y2="287.8" stroke="#b82a2a" stroke-width="1.8" stroke-opacity="0.85"/>
<line x1="627.5" y1="283.5" x2="627.5" y2="287.6" stroke="#b82a2a" stroke-width="1.8" stroke-opacity="0.85"/>
<line x1="630.5" y1="283.5" x2="630.5" y2="287.4" stroke="#b82a2a" stroke-width="1.8" stroke-opacity="0.85"/>
<line x1="634.5" y1="283.5" x2="634.5" y2="285.0" stroke="#b82a2a" stroke-width="1.8" stroke-opacity="0.85"/>
<line x1="645.5" y1="283.5" x2="645.5" y2="282.2" stroke="#b82a2a" stroke-width="1.8" stroke-opacity="0.85"/>
<line x1="649.5" y1="283.5" x2="649.5" y2="281.0" stroke="#b82a2a" stroke-width="1.8" stroke-opacity="0.85"/>
<line x1="652.5" y1="283.5" x2="652.5" y2="280.0" stroke="#b82a2a" stroke-width="1.8" stroke-opacity="0.85"/>
<line x1="656.5" y1="283.5" x2="656.5" y2="278.9" stroke="#b82a2a" stroke-width="1.8" stroke-opacity="0.85"/>
<line x1="660.5" y1="283.5" x2="660.5" y2="277.8" stroke="#b82a2a" stroke-width="1.8" stroke-opacity="0.85"/>
<line x1="663.5" y1="283.5" x2="663.5" y2="277.0" stroke="#b82a2a" stroke-width="1.8" stroke-opacity="0.85"/>
<line x1="667.5" y1="283.5" x2="667.5" y2="276.6" stroke="#b82a2a" stroke-width="1.8" stroke-opacity="0.85"/>
<line x1="671.5" y1="283.5" x2="671.5" y2="277.4" stroke="#b82a2a" stroke-width="1.8" stroke-opacity="0.85"/>
<line x1="674.5" y1="283.5" x2="674.5" y2="278.3" stroke="#b82a2a" stroke-width="1.8" stroke-opacity="0.85"/>
<line x1="678.5" y1="283.5" x2="678.5" y2="279.4" stroke="#b82a2a" stroke-width="1.8" stroke-opacity="0.85"/>
<line x1="682.5" y1="283.5" x2="682.5" y2="280.3" stroke="#b82a2a" stroke-width="1.8" stroke-opacity="0.85"/>
<line x1="685.5" y1="283.5" x2="685.5" y2="281.1" stroke="#b82a2a" stroke-width="1.8" stroke-opacity="0.85"/>
<line x1="689.5" y1="283.5" x2="689.5" y2="281.4" stroke="#b82a2a" stroke-width="1.8" stroke-opacity="0.85"/>
<line x1="693.5" y1="283.5" x2="693.5" y2="281.4" stroke="#b82a2a" stroke-width="1.8" stroke-opacity="0.85"/>
<line x1="696.5" y1="283.5" x2="696.5" y2="281.3" stroke="#b82a2a" stroke-width="1.8" stroke-opacity="0.85"/>
<line x1="700.5" y1="283.5" x2="700.5" y2="281.5" stroke="#b82a2a" stroke-width="1.8" stroke-opacity="0.85"/>
<line x1="704.5" y1="283.5" x2="704.5" y2="281.4" stroke="#b82a2a" stroke-width="1.8" stroke-opacity="0.85"/>
<line x1="707.5" y1="283.5" x2="707.5" y2="280.9" stroke="#b82a2a" stroke-width="1.8" stroke-opacity="0.85"/>
<line x1="711.5" y1="283.5" x2="711.5" y2="280.6" stroke="#b82a2a" stroke-width="1.8" stroke-opacity="0.85"/>
<line x1="715.5" y1="283.5" x2="715.5" y2="280.7" stroke="#b82a2a" stroke-width="1.8" stroke-opacity="0.85"/>
<line x1="719.5" y1="283.5" x2="719.5" y2="280.8" stroke="#b82a2a" stroke-width="1.8" stroke-opacity="0.85"/>
<line x1="722.5" y1="283.5" x2="722.5" y2="281.1" stroke="#b82a2a" stroke-width="1.8" stroke-opacity="0.85"/>
<line x1="726.5" y1="283.5" x2="726.5" y2="281.7" stroke="#b82a2a" stroke-width="1.8" stroke-opacity="0.85"/>
<line x1="730.5" y1="283.5" x2="730.5" y2="281.9" stroke="#b82a2a" stroke-width="1.8" stroke-opacity="0.85"/>
<line x1="733.5" y1="283.5" x2="733.5" y2="281.6" stroke="#b82a2a" stroke-width="1.8" stroke-opacity="0.85"/>
<line x1="737.5" y1="283.5" x2="737.5" y2="281.3" stroke="#b82a2a" stroke-width="1.8" stroke-opacity="0.85"/>
<line x1="741.5" y1="283.5" x2="741.5" y2="281.5" stroke="#b82a2a" stroke-width="1.8" stroke-opacity="0.85"/>
<line x1="744.5" y1="283.5" x2="744.5" y2="281.7" stroke="#b82a2a" stroke-width="1.8" stroke-opacity="0.85"/>
<line x1="748.5" y1="283.5" x2="748.5" y2="281.9" stroke="#b82a2a" stroke-width="1.8" stroke-opacity="0.85"/>
<line x1="752.5" y1="283.5" x2="752.5" y2="282.1" stroke="#b82a2a" stroke-width="1.8" stroke-opacity="0.85"/>
<line x1="755.5" y1="283.5" x2="755.5" y2="282.1" stroke="#b82a2a" stroke-width="1.8" stroke-opacity="0.85"/>
<line x1="759.5" y1="283.5" x2="759.5" y2="282.1" stroke="#b82a2a" stroke-width="1.8" stroke-opacity="0.85"/>
<line x1="763.5" y1="283.5" x2="763.5" y2="282.0" stroke="#b82a2a" stroke-width="1.8" stroke-opacity="0.85"/>
<line x1="766.5" y1="283.5" x2="766.5" y2="282.0" stroke="#b82a2a" stroke-width="1.8" stroke-opacity="0.85"/>
<line x1="770.5" y1="283.5" x2="770.5" y2="282.0" stroke="#b82a2a" stroke-width="1.8" stroke-opacity="0.85"/>
<line x1="774.5" y1="283.5" x2="774.5" y2="282.0" stroke="#b82a2a" stroke-width="1.8" stroke-opacity="0.85"/>
<line x1="777.5" y1="283.5" x2="777.5" y2="281.9" stroke="#b82a2a" stroke-width="1.8" stroke-opacity="0.85"/>
<line x1="781.5" y1="283.5" x2="781.5" y2="282.2" stroke="#b82a2a" stroke-width="1.8" stroke-opacity="0.85"/>
<line x1="785.5" y1="283.5" x2="785.5" y2="282.6" stroke="#b82a2a" stroke-width="1.8" stroke-opacity="0.85"/>
<line x1="796.5" y1="283.5" x2="796.5" y2="284.5" stroke="#b82a2a" stroke-width="1.8" stroke-opacity="0.85"/>
<line x1="799.5" y1="283.5" x2="799.5" y2="285.3" stroke="#b82a2a" stroke-width="1.8" stroke-opacity="0.85"/>
<line x1="803.5" y1="283.5" x2="803.5" y2="286.2" stroke="#b82a2a" stroke-width="1.8" stroke-opacity="0.85"/>
<line x1="807.5" y1="283.5" x2="807.5" y2="286.9" stroke="#b82a2a" stroke-width="1.8" stroke-opacity="0.85"/>
<line x1="810.5" y1="283.5" x2="810.5" y2="287.3" stroke="#b82a2a" stroke-width="1.8" stroke-opacity="0.85"/>
<line x1="814.5" y1="283.5" x2="814.5" y2="287.7" stroke="#b82a2a" stroke-width="1.8" stroke-opacity="0.85"/>
<line x1="818.5" y1="283.5" x2="818.5" y2="288.1" stroke="#b82a2a" stroke-width="1.8" stroke-opacity="0.85"/>
<line x1="821.5" y1="283.5" x2="821.5" y2="288.4" stroke="#b82a2a" stroke-width="1.8" stroke-opacity="0.85"/>
<line x1="825.5" y1="283.5" x2="825.5" y2="288.1" stroke="#b82a2a" stroke-width="1.8" stroke-opacity="0.85"/>
<line x1="829.5" y1="283.5" x2="829.5" y2="287.6" stroke="#b82a2a" stroke-width="1.8" stroke-opacity="0.85"/>
<line x1="832.5" y1="283.5" x2="832.5" y2="287.2" stroke="#b82a2a" stroke-width="1.8" stroke-opacity="0.85"/>
<line x1="836.5" y1="283.5" x2="836.5" y2="286.5" stroke="#b82a2a" stroke-width="1.8" stroke-opacity="0.85"/>
<line x1="840.5" y1="283.5" x2="840.5" y2="286.0" stroke="#b82a2a" stroke-width="1.8" stroke-opacity="0.85"/>
<line x1="843.5" y1="283.5" x2="843.5" y2="285.9" stroke="#b82a2a" stroke-width="1.8" stroke-opacity="0.85"/>
<line x1="847.5" y1="283.5" x2="847.5" y2="285.8" stroke="#b82a2a" stroke-width="1.8" stroke-opacity="0.85"/>
<line x1="851.5" y1="283.5" x2="851.5" y2="285.4" stroke="#b82a2a" stroke-width="1.8" stroke-opacity="0.85"/>
<line x1="854.5" y1="283.5" x2="854.5" y2="285.1" stroke="#b82a2a" stroke-width="1.8" stroke-opacity="0.85"/>
<line x1="858.5" y1="283.5" x2="858.5" y2="284.7" stroke="#b82a2a" stroke-width="1.8" stroke-opacity="0.85"/>
<polyline points="16.0,282.8 31.0,286.6 40.8,288.0 63.7,289.0 81.0,290.0 92.4,288.6 100.0,294.3 111.5,302.0 126.8,306.7 142.0,315.0 149.7,313.4 161.0,304.8 168.8,299.0 174.5,299.0 188.0,291.4 199.3,284.7 207.0,283.8 214.6,281.9 222.3,283.8 230.0,284.7 249.0,287.6 254.8,289.0 277.7,290.5 285.4,292.8 312.0,294.0 325.5,294.7 340.8,297.2 352.2,297.2 363.7,291.4 382.8,284.7 388.5,281.0 396.0,281.9 411.4,285.7 421.0,286.6 440.0,288.6 458.4,289.0 468.0,282.8 475.6,277.0 492.7,276.0 500.4,274.2 510.0,278.0 521.4,282.8 525.2,281.0 540.5,281.0 559.6,282.8 569.0,282.8 588.2,291.4 601.6,300.0 616.9,303.8 630.4,306.2 641.7,300.5 654.7,292.3 665.1,284.0 668.6,282.3 680.8,280.6 689.4,280.1 698.1,278.8 703.3,278.4 710.3,275.4 720.0,272.8 728.8,272.3 736.4,269.5 751.7,267.5 767.0,264.7 778.4,262.8 791.8,262.8 797.5,266.6 809.0,272.3 822.3,278.0 831.9,279.0 847.2,279.4 858.6,278.6" fill="none" stroke="#0c0c78" stroke-width="1.6"/>
<polyline points="16.0,282.8 54.0,286.3 92.4,288.6 111.5,295.2 130.6,302.0 149.7,309.6 161.0,307.3 178.3,301.0 197.4,293.3 216.5,283.8 236.0,283.8 277.7,287.6 287.3,289.5 316.0,292.4 352.2,295.2 373.2,289.5 394.2,282.8 421.0,284.7 450.0,287.6 460.3,287.6 475.6,281.9 502.3,276.1 521.4,279.4 559.6,281.0 578.7,283.8 597.8,288.6 616.9,298.0 634.8,302.3 654.7,297.5 667.7,291.4 679.0,285.8 686.0,283.2 695.5,281.9 706.8,280.1 720.0,276.2 736.4,272.3 755.5,268.5 774.6,265.3 789.9,263.3 805.2,266.6 824.2,272.3 839.5,276.1 858.6,277.1" fill="none" stroke="#c81e1e" stroke-width="1.6"/>
<path d="M21.9 283.3h0.01M25.6 283.7h0.01M29.2 284.0h0.01M32.9 284.4h0.01M36.6 284.7h0.01M40.3 285.0h0.01M43.9 285.4h0.01M47.6 285.7h0.01M51.3 286.0h0.01M54.9 286.4h0.01M58.6 286.6h0.01M62.3 286.8h0.01M66.0 287.0h0.01M69.6 287.2h0.01M73.3 287.5h0.01M77.0 287.7h0.01M80.6 287.9h0.01M84.3 288.1h0.01M88.0 288.3h0.01M91.7 288.6h0.01M95.3 289.6h0.01M99.0 290.9h0.01M102.7 292.1h0.01M106.3 293.4h0.01M110.0 294.7h0.01M113.7 296.0h0.01M117.3 297.3h0.01M121.0 298.6h0.01M124.7 299.9h0.01M128.4 301.2h0.01M132.0 302.6h0.01M135.7 304.0h0.01M139.4 305.5h0.01M143.0 307.0h0.01M146.7 308.4h0.01M150.4 309.5h0.01M154.1 308.7h0.01M157.7 308.0h0.01M161.4 307.2h0.01M165.1 305.8h0.01M168.7 304.5h0.01M172.4 303.1h0.01M176.1 301.8h0.01M179.8 300.4h0.01M183.4 298.9h0.01M187.1 297.5h0.01M190.8 296.0h0.01M194.4 294.5h0.01M198.1 292.9h0.01M201.8 291.1h0.01M205.5 289.3h0.01M209.1 287.5h0.01M212.8 285.6h0.01M216.5 283.8h0.01M220.1 283.8h0.01M223.8 283.8h0.01M227.5 283.8h0.01M231.2 283.8h0.01M234.8 283.8h0.01M238.5 284.0h0.01M242.2 284.4h0.01M245.8 284.7h0.01M249.5 285.0h0.01M253.2 285.4h0.01M256.8 285.7h0.01M260.5 286.0h0.01M264.2 286.4h0.01M267.9 286.7h0.01M271.5 287.0h0.01M275.2 287.4h0.01M278.9 287.8h0.01M282.5 288.6h0.01M286.2 289.3h0.01M289.9 289.8h0.01M293.6 290.1h0.01M297.2 290.5h0.01M300.9 290.9h0.01M304.6 291.2h0.01M308.2 291.6h0.01M311.9 292.0h0.01M315.6 292.4h0.01M319.3 292.7h0.01M322.9 292.9h0.01M326.6 293.2h0.01M330.3 293.5h0.01M333.9 293.8h0.01M337.6 294.1h0.01M341.3 294.4h0.01M345.0 294.6h0.01M348.6 294.9h0.01M352.3 295.2h0.01M356.0 294.2h0.01M359.6 293.2h0.01M363.3 292.2h0.01M367.0 291.2h0.01M370.6 290.2h0.01M374.3 289.1h0.01M378.0 288.0h0.01M381.7 286.8h0.01M385.3 285.6h0.01M389.0 284.5h0.01M392.7 283.3h0.01M396.3 283.0h0.01M400.0 283.2h0.01M403.7 283.5h0.01M407.4 283.7h0.01M411.0 284.0h0.01M414.7 284.3h0.01M418.4 284.5h0.01M422.0 284.8h0.01M425.7 285.2h0.01M429.4 285.5h0.01M433.1 285.9h0.01M436.7 286.3h0.01M440.4 286.6h0.01M444.1 287.0h0.01M447.7 287.4h0.01M451.4 287.6h0.01M455.1 287.6h0.01M458.8 287.6h0.01M462.4 286.8h0.01M466.1 285.4h0.01M469.8 284.1h0.01M473.4 282.7h0.01M477.1 281.6h0.01M480.8 280.8h0.01M484.5 280.0h0.01M488.1 279.2h0.01M491.8 278.4h0.01M495.5 277.6h0.01M499.1 276.8h0.01M502.8 276.2h0.01M506.5 276.8h0.01M510.1 277.5h0.01M513.8 278.1h0.01M517.5 278.7h0.01M521.2 279.4h0.01M524.8 279.5h0.01M528.5 279.7h0.01M532.2 279.9h0.01M535.8 280.0h0.01M539.5 280.2h0.01M543.2 280.3h0.01M546.9 280.5h0.01M550.5 280.6h0.01M554.2 280.8h0.01M557.9 280.9h0.01M561.5 281.3h0.01M565.2 281.8h0.01M568.9 282.4h0.01M572.6 282.9h0.01M576.2 283.4h0.01M579.9 284.1h0.01M583.6 285.0h0.01M587.2 285.9h0.01M590.9 286.9h0.01M594.6 287.8h0.01M598.3 288.8h0.01M601.9 290.6h0.01M605.6 292.4h0.01M609.3 294.2h0.01M612.9 296.1h0.01M616.6 297.9h0.01M620.3 298.8h0.01M624.0 299.7h0.01M627.6 300.6h0.01M631.3 301.5h0.01M635.0 302.3h0.01M638.6 301.4h0.01M642.3 300.5h0.01M646.0 299.6h0.01M649.6 298.7h0.01M653.3 297.8h0.01M657.0 296.4h0.01M660.7 294.7h0.01M664.3 293.0h0.01M668.0 291.2h0.01M671.7 289.4h0.01M675.3 287.6h0.01M679.0 285.8h0.01M682.7 284.4h0.01M686.4 283.2h0.01M690.0 282.6h0.01M693.7 282.1h0.01M697.4 281.6h0.01M701.0 281.0h0.01M704.7 280.4h0.01M708.4 279.6h0.01M712.1 278.5h0.01M715.7 277.5h0.01M719.4 276.4h0.01M723.1 275.5h0.01M726.7 274.6h0.01M730.4 273.7h0.01M734.1 272.9h0.01M737.8 272.0h0.01M741.4 271.3h0.01M745.1 270.6h0.01M748.8 269.8h0.01M752.4 269.1h0.01M756.1 268.4h0.01M759.8 267.8h0.01M763.5 267.2h0.01M767.1 266.6h0.01M770.8 265.9h0.01M774.5 265.3h0.01M778.1 264.8h0.01M781.8 264.4h0.01M785.5 263.9h0.01M789.1 263.4h0.01M792.8 263.9h0.01M796.5 264.7h0.01M800.2 265.5h0.01M803.8 266.3h0.01M807.5 267.3h0.01M811.2 268.4h0.01M814.8 269.5h0.01M818.5 270.6h0.01M822.2 271.7h0.01M825.9 272.7h0.01M829.5 273.6h0.01M833.2 274.5h0.01M836.9 275.4h0.01M840.5 276.2h0.01M844.2 276.3h0.01M847.9 276.5h0.01M851.6 276.7h0.01M855.2 276.9h0.01M858.9 277.1h0.01" stroke="#ec2626" stroke-width="3.2" stroke-linecap="round" fill="none"/>
<line x1="34" y1="330.5" x2="858" y2="330.5" stroke="#1c1ca4" stroke-width="2"/>
<line x1="17" y1="382.5" x2="858" y2="382.5" stroke="#1c1ca4" stroke-width="2"/>
<polyline points="16.0,352.5 24.6,366.8 30.3,364.3 37.0,365.8 39.9,371.6 44.6,363.0 58.0,362.0 65.7,374.4 73.3,368.7 77.1,369.7 88.6,356.3 91.4,359.2" fill="none" stroke="#ee9432" stroke-width="1"/>
<polyline points="91.4,359.2 95.3,385.9 98.1,386.8 102.9,379.6 105.8,381.1 113.4,392.2 121.0,380.7 124.9,383.0 139.2,395.4 143.0,385.9 147.8,387.8" fill="none" stroke="#2ed52e" stroke-width="1"/>
<polyline points="147.8,387.8 157.3,358.2 161.1,357.2 165.0,361.0 168.8,361.0 172.6,369.7 182.2,352.5 191.7,356.3 197.4,347.7 202.2,351.0 210.8,351.0 216.5,349.6 220.4,361.0 226.0,362.0 230.9,363.0 236.0,361.0 239.5,364.9 245.3,365.8 249.1,374.4 252.9,366.8 256.7,365.8 260.6,356.3 266.3,364.9 272.0,367.7 279.7,372.5 285.4,380.7 291.1,373.5 293.0,374.4 296.8,366.8 302.6,370.6 307.3,368.1 311.2,379.6 316.0,367.7 319.8,371.6 323.6,370.0 326.4,375.4 329.3,367.7 334.0,376.3 338.0,380.0 341.0,376.0 344.6,374.4 348.4,375.4 359.9,351.5 363.7,356.3 366.6,355.9 370.4,349.6 375.1,351.5 378.0,348.6 381.8,352.5 388.5,343.3 392.3,350.6 395.2,351.5 400.0,369.3 403.8,363.0 408.6,363.9 414.3,366.8 418.1,357.2 422.9,361.0 428.6,361.0 432.4,363.9 436.3,364.9 440.0,370.6 445.8,362.0 448.8,361.0 453.6,363.9 457.4,364.9 462.2,345.8 469.8,334.3 475.6,337.2 481.3,348.6 484.2,351.5 488.0,344.4 495.6,342.5 498.5,342.9 506.1,364.9 509.0,357.8 516.6,363.9 528.0,346.7 531.9,353.4 535.7,352.8 540.5,358.2 547.2,355.3 552.9,361.0 559.6,359.2 563.4,358.2 568.2,350.6 572.0,363.0 576.8,371.6 582.5,375.4 586.3,374.4 590.2,382.0" fill="none" stroke="#ee9432" stroke-width="1"/>
<polyline points="590.2,382.0 595.9,387.8 601.6,385.9 609.2,386.8 613.1,386.8 616.9,396.4 619.8,384.0 623.6,383.0" fill="none" stroke="#2ed52e" stroke-width="1"/>
<polyline points="623.6,383.0 627.4,381.1 630.3,384.0 638.0,376.3 641.7,359.2 645.5,354.4 649.4,359.2 655.1,351.5 660.8,343.9 663.8,344.4 670.5,342.5 673.4,345.8 678.1,355.3 682.9,347.7 690.6,353.4 693.4,352.5 703.9,344.8 706.8,334.3 711.6,337.2 717.3,335.7 722.1,352.5 728.8,333.4 732.6,333.8 740.2,337.2 744.0,333.4 748.8,341.4 753.6,336.2 759.3,334.3" fill="none" stroke="#ee9432" stroke-width="1"/>
<polyline points="759.3,334.3 765.0,327.6 769.8,328.6 774.6,326.7 782.2,333.4" fill="none" stroke="#c83cd8" stroke-width="1"/>
<polyline points="782.2,333.4 786.0,332.4" fill="none" stroke="#ee9432" stroke-width="1"/>
<polyline points="786.0,332.4 788.0,328.6" fill="none" stroke="#c83cd8" stroke-width="1"/>
<polyline points="788.0,328.6 793.7,344.8 795.6,354.4 801.3,352.5 804.2,354.4 807.0,354.4 809.9,349.6 814.7,356.3 820.4,357.2 824.2,354.4 828.0,356.3 835.7,348.6 841.4,350.6 847.2,355.3 851.9,347.7 857.7,344.8" fill="none" stroke="#ee9432" stroke-width="1"/>
<rect x="16.5" y="38.5" width="870.0" height="216.0" fill="none" stroke="#aabacb" stroke-width="1.3"/>
<rect x="16.5" y="260.5" width="870.0" height="57.0" fill="none" stroke="#aabacb" stroke-width="1.3"/>
<rect x="16.5" y="323.5" width="870.0" height="76.0" fill="none" stroke="#aabacb" stroke-width="1.3"/>
<line x1="886" y1="43.5" x2="890" y2="43.5" stroke="#aabacb"/>
<line x1="886" y1="73.5" x2="890" y2="73.5" stroke="#aabacb"/>
<line x1="886" y1="104.5" x2="890" y2="104.5" stroke="#aabacb"/>
<line x1="886" y1="135.5" x2="890" y2="135.5" stroke="#aabacb"/>
<line x1="886" y1="166.5" x2="890" y2="166.5" stroke="#aabacb"/>
<line x1="886" y1="197.5" x2="890" y2="197.5" stroke="#aabacb"/>
<line x1="886" y1="228.5" x2="890" y2="228.5" stroke="#aabacb"/>
<line x1="886" y1="283.5" x2="890" y2="283.5" stroke="#aabacb"/>
<line x1="886" y1="343.5" x2="890" y2="343.5" stroke="#aabacb"/>
<line x1="886" y1="369.5" x2="890" y2="369.5" stroke="#aabacb"/>
<line x1="32.5" y1="399.5" x2="32.5" y2="403" stroke="#aabacb"/>
<line x1="54.5" y1="399.5" x2="54.5" y2="403" stroke="#aabacb"/>
<line x1="76.5" y1="399.5" x2="76.5" y2="403" stroke="#aabacb"/>
<line x1="98.5" y1="399.5" x2="98.5" y2="403" stroke="#aabacb"/>
<line x1="120.5" y1="399.5" x2="120.5" y2="403" stroke="#aabacb"/>
<line x1="142.5" y1="399.5" x2="142.5" y2="403" stroke="#aabacb"/>
<line x1="164.5" y1="399.5" x2="164.5" y2="403" stroke="#aabacb"/>
<line x1="186.5" y1="399.5" x2="186.5" y2="403" stroke="#aabacb"/>
<line x1="208.5" y1="399.5" x2="208.5" y2="403" stroke="#aabacb"/>
<line x1="230.5" y1="399.5" x2="230.5" y2="403" stroke="#aabacb"/>
<line x1="252.5" y1="399.5" x2="252.5" y2="403" stroke="#aabacb"/>
<line x1="274.5" y1="399.5" x2="274.5" y2="403" stroke="#aabacb"/>
<line x1="296.5" y1="399.5" x2="296.5" y2="403" stroke="#aabacb"/>
<line x1="318.5" y1="399.5" x2="318.5" y2="403" stroke="#aabacb"/>
<line x1="340.5" y1="399.5" x2="340.5" y2="403" stroke="#aabacb"/>
<line x1="362.5" y1="399.5" x2="362.5" y2="403" stroke="#aabacb"/>
<line x1="384.5" y1="399.5" x2="384.5" y2="403" stroke="#aabacb"/>
<line x1="407.5" y1="399.5" x2="407.5" y2="403" stroke="#aabacb"/>
<line x1="429.5" y1="399.5" x2="429.5" y2="403" stroke="#aabacb"/>
<line x1="451.5" y1="399.5" x2="451.5" y2="403" stroke="#aabacb"/>
<line x1="473.5" y1="399.5" x2="473.5" y2="403" stroke="#aabacb"/>
<line x1="495.5" y1="399.5" x2="495.5" y2="403" stroke="#aabacb"/>
<line x1="517.5" y1="399.5" x2="517.5" y2="403" stroke="#aabacb"/>
<line x1="539.5" y1="399.5" x2="539.5" y2="403" stroke="#aabacb"/>
<line x1="561.5" y1="399.5" x2="561.5" y2="403" stroke="#aabacb"/>
<line x1="583.5" y1="399.5" x2="583.5" y2="403" stroke="#aabacb"/>
<line x1="605.5" y1="399.5" x2="605.5" y2="403" stroke="#aabacb"/>
<line x1="627.5" y1="399.5" x2="627.5" y2="403" stroke="#aabacb"/>
<line x1="649.5" y1="399.5" x2="649.5" y2="403" stroke="#aabacb"/>
<line x1="671.5" y1="399.5" x2="671.5" y2="403" stroke="#aabacb"/>
<line x1="693.5" y1="399.5" x2="693.5" y2="403" stroke="#aabacb"/>
<line x1="715.5" y1="399.5" x2="715.5" y2="403" stroke="#aabacb"/>
<line x1="737.5" y1="399.5" x2="737.5" y2="403" stroke="#aabacb"/>
<line x1="759.5" y1="399.5" x2="759.5" y2="403" stroke="#aabacb"/>
<line x1="781.5" y1="399.5" x2="781.5" y2="403" stroke="#aabacb"/>
<line x1="803.5" y1="399.5" x2="803.5" y2="403" stroke="#aabacb"/>
<line x1="825.5" y1="399.5" x2="825.5" y2="403" stroke="#aabacb"/>
<line x1="847.5" y1="399.5" x2="847.5" y2="403" stroke="#aabacb"/>
<line x1="869.5" y1="399.5" x2="869.5" y2="403" stroke="#aabacb"/>
<text transform="translate(894,50.0) scale(0.96,1)" class="ax">1.4200</text>
<text transform="translate(894,80.0) scale(0.96,1)" class="ax">1.4100</text>
<text transform="translate(894,111.0) scale(0.96,1)" class="ax">1.4000</text>
<text transform="translate(894,142.0) scale(0.96,1)" class="ax">1.3900</text>
<text transform="translate(894,173.0) scale(0.96,1)" class="ax">1.3800</text>
<text transform="translate(894,204.0) scale(0.96,1)" class="ax">1.3700</text>
<text transform="translate(894,235.0) scale(0.96,1)" class="ax">1.3600</text>
<text transform="translate(894,289.5) scale(0.96,1)" class="ax">-0.00</text>
<text transform="translate(894,350) scale(0.96,1)" class="ax">60</text>
<text transform="translate(894,376) scale(0.96,1)" class="ax">40</text>
<text transform="translate(31.40,422) scale(0.9,1)" class="ax" text-anchor="middle">14</text>
<text transform="translate(53.43,422) scale(0.9,1)" class="ax" text-anchor="middle">15</text>
<text transform="translate(75.46,422) scale(0.9,1)" class="ax" text-anchor="middle">16</text>
<text transform="translate(97.49,422) scale(0.9,1)" class="ax" text-anchor="middle">17</text>
<text transform="translate(119.52,422) scale(0.9,1)" class="ax" text-anchor="middle">18</text>
<text transform="translate(141.55,422) scale(0.9,1)" class="ax" text-anchor="middle">21</text>
<text transform="translate(163.58,422) scale(0.9,1)" class="ax" text-anchor="middle">22</text>
<text transform="translate(185.61,422) scale(0.9,1)" class="ax" text-anchor="middle">23</text>
<text transform="translate(207.64,422) scale(0.9,1)" class="ax" text-anchor="middle">24</text>
<text transform="translate(229.67,422) scale(0.9,1)" class="ax" text-anchor="middle">25</text>
<text transform="translate(251.70,422) scale(0.9,1)" class="ax" text-anchor="middle">28</text>
<text transform="translate(273.73,422) scale(0.9,1)" class="ax" text-anchor="middle">29</text>
<text transform="translate(295.76,422) scale(0.9,1)" class="ax" text-anchor="middle">30</text>
<text transform="translate(317.79,422) scale(0.9,1)" class="ax" text-anchor="middle">1</text>
<text transform="translate(339.82,422) scale(0.9,1)" class="ax" text-anchor="middle">2</text>
<text transform="translate(361.85,422) scale(0.9,1)" class="ax" text-anchor="middle">5</text>
<text transform="translate(383.88,422) scale(0.9,1)" class="ax" text-anchor="middle">6</text>
<text transform="translate(405.91,422) scale(0.9,1)" class="ax" text-anchor="middle">7</text>
<text transform="translate(427.94,422) scale(0.9,1)" class="ax" text-anchor="middle">8</text>
<text transform="translate(449.97,422) scale(0.9,1)" class="ax" text-anchor="middle">9</text>
<text transform="translate(472.00,422) scale(0.9,1)" class="ax" text-anchor="middle">12</text>
<text transform="translate(494.03,422) scale(0.9,1)" class="ax" text-anchor="middle">13</text>
<text transform="translate(516.06,422) scale(0.9,1)" class="ax" text-anchor="middle">14</text>
<text transform="translate(538.09,422) scale(0.9,1)" class="ax" text-anchor="middle">15</text>
<text transform="translate(560.12,422) scale(0.9,1)" class="ax" text-anchor="middle">16</text>
<text transform="translate(582.15,422) scale(0.9,1)" class="ax" text-anchor="middle">19</text>
<text transform="translate(604.18,422) scale(0.9,1)" class="ax" text-anchor="middle">20</text>
<text transform="translate(626.21,422) scale(0.9,1)" class="ax" text-anchor="middle">21</text>
<text transform="translate(648.24,422) scale(0.9,1)" class="ax" text-anchor="middle">22</text>
<text transform="translate(670.27,422) scale(0.9,1)" class="ax" text-anchor="middle">23</text>
<text transform="translate(692.30,422) scale(0.9,1)" class="ax" text-anchor="middle">26</text>
<text transform="translate(714.33,422) scale(0.9,1)" class="ax" text-anchor="middle">27</text>
<text transform="translate(736.36,422) scale(0.9,1)" class="ax" text-anchor="middle">28</text>
<text transform="translate(758.39,422) scale(0.9,1)" class="ax" text-anchor="middle">29</text>
<text transform="translate(780.42,422) scale(0.9,1)" class="ax" text-anchor="middle">30</text>
<text transform="translate(802.45,422) scale(0.9,1)" class="ax" text-anchor="middle">2</text>
<text transform="translate(824.48,422) scale(0.9,1)" class="ax" text-anchor="middle">3</text>
<text transform="translate(846.51,422) scale(0.9,1)" class="ax" text-anchor="middle">4</text>
<text transform="translate(868.54,422) scale(0.9,1)" class="ax" text-anchor="middle">5</text>
</svg>
<div class="leg" style="left:19px;color:#1c1ce2">Exponential_Moving_Average</div>
<div class="leg" style="left:156.5px;color:#e02222">Exponential_Moving_Average</div>
<div id="legend"><div class="strip"></div><div class="sq" style="left:4px;background:linear-gradient(#f25050,#c81c1c);box-shadow:inset 0 0 0 0.7px #a01818"></div><div class="sq" style="left:17px;background:linear-gradient(#38b2ea,#1a7cc0);box-shadow:inset 0 0 0 0.7px #1a6aa0"></div></div>
<div class="plab" style="left:18px;top:262px;color:#13136e;font-size:10.7px;transform:scaleX(0.87);padding-right:1px">MACD</div>
<div class="plab" style="left:18px;top:325px;color:#f5912c;font-size:10.7px;transform:scaleX(0.86);padding-right:2px">RSI</div>
<div class="lbl" style="left:16px;width:71px"><span>Июнь 2021</span></div>
<div class="lbl" style="left:318px;width:70px"><span>Июль 2021</span></div>
<div class="lbl" style="left:803px;width:61px"><span>Авг 2021</span></div>
<div class="mk" style="left:16px"></div>
<div class="mk" style="left:318px"></div>
<div class="mk" style="left:803px"></div>
<div style="position:absolute;left:886px;top:114px;width:48px;height:21px;background:#fcfcfc;"><span style="position:absolute;left:8px;top:4px;color:#3c4048;font-size:11px;line-height:12px">1.3935</span></div>
</body></html>
